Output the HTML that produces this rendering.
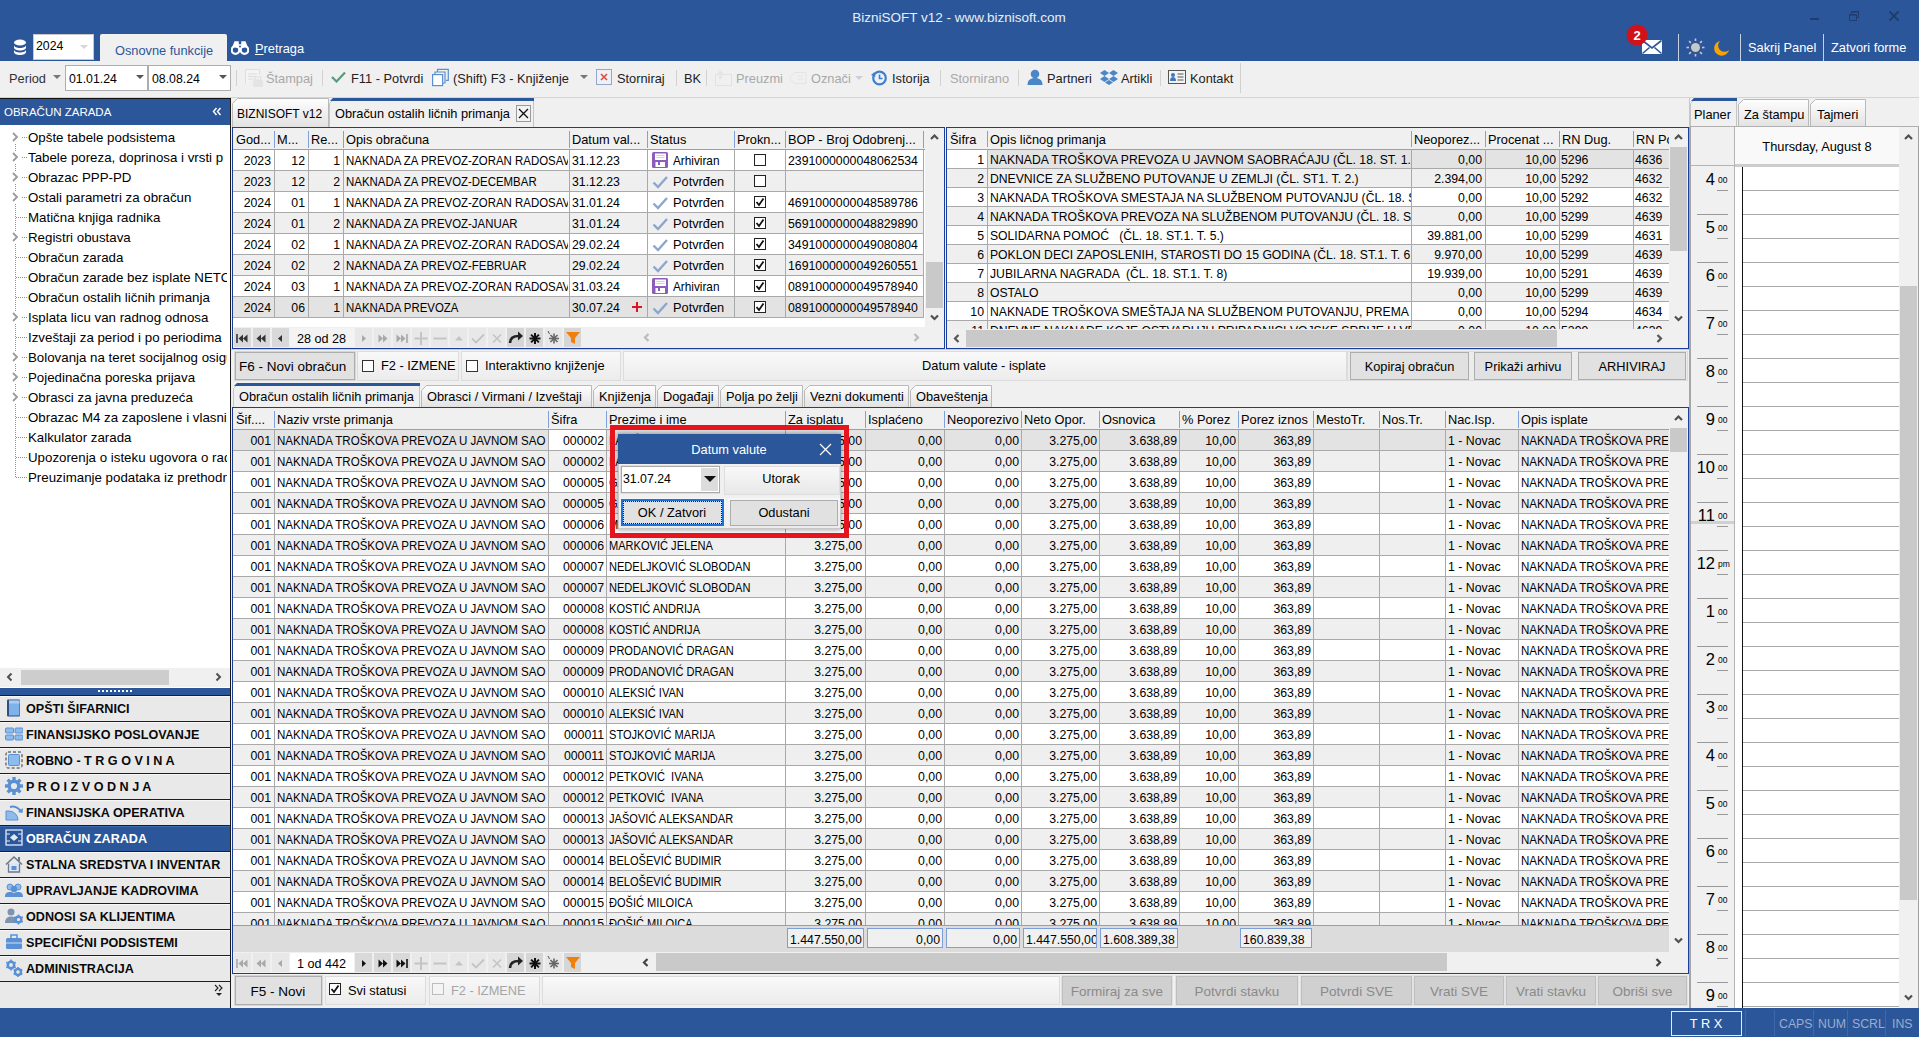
<!DOCTYPE html><html><head><meta charset="utf-8"><title>BizniSOFT</title><style>
*{box-sizing:border-box;margin:0;padding:0}
html,body{width:1919px;height:1037px;overflow:hidden;background:#f0f0f0;font-family:"Liberation Sans",sans-serif;color:#000;font-size:12.8px}
.a{position:absolute}
.t{position:absolute;white-space:nowrap;line-height:1}
.blue{background:#2b579a}
.sep{position:absolute;width:1px;background:#c8c8c8}
.dis{color:#9a9a9a}
.up{font-size:11.6px}
.num{font-size:12.3px}
.cell{position:absolute;white-space:nowrap;overflow:hidden;line-height:20px;height:20px}
.hd{position:absolute;white-space:nowrap;overflow:hidden;line-height:19px;height:19px;font-size:12.8px}
.btn{position:absolute;background:#e1e1e1;border:1px solid #adadad;text-align:center;white-space:nowrap}
.cb{position:absolute;width:13px;height:13px;border:1px solid #333;background:#fff}
.tab{position:absolute;background:linear-gradient(#fbfbfb,#e6e6e6);border:1px solid #b9b9b9;border-bottom:none;white-space:nowrap}
</style></head><body><div class="a" style="left:0px;top:0px;width:1919px;height:61px;background:#2b579a"></div>
<div class="t " style="left:759.0px;width:400px;text-align:center;top:11.00px;font-size:13.5px;color:#e8eef7;">BizniSOFT v12 - www.biznisoft.com</div>
<div class="a" style="left:1810px;top:18px;width:9px;height:2px;background:#1f3d6e"></div>
<svg class="a" style="left:1848px;top:10px;" width="12" height="12" viewBox="0 0 12 12"><rect x="1.5" y="4.5" width="7" height="6" fill="none" stroke="#1f3d6e"/><rect x="1" y="4" width="8" height="1.6" fill="#1f3d6e"/><path d="M3.5 4V1.5h7v6H9" fill="none" stroke="#1f3d6e"/><rect x="3" y="1" width="8" height="1.6" fill="#1f3d6e"/></svg>
<svg class="a" style="left:1888px;top:10px;" width="12" height="12" viewBox="0 0 12 12"><path d="M1.5 1.5l9 9M10.5 1.5l-9 9" stroke="#1f3d6e" stroke-width="2"/></svg>
<svg class="a" style="left:13px;top:39px;" width="14" height="16" viewBox="0 0 14 16"><ellipse cx="7" cy="3.5" rx="6" ry="3" fill="#fff"/><path d="M1 6c0 4 12 4 12 0v2.5c0 4-12 4-12 0z" fill="#fff"/><path d="M1 10.5c0 4 12 4 12 0V13c0 4-12 4-12 0z" fill="#fff"/></svg>
<div class="a" style="left:33px;top:34px;width:61px;height:26px;background:#fff;border:1px solid #c9c9c9"></div>
<div class="t " style="left:36px;top:40.00px;font-size:12.3px;">2024</div>
<svg class="a" style="left:80px;top:45px;" width="8" height="5" viewBox="0 0 8 5"><path d="M0 0h8L4 4z" fill="#d6d6d6"/></svg>
<div class="a" style="left:100px;top:34px;width:127px;height:27px;background:#f0f0f0;border-radius:2px 2px 0 0"></div>
<div class="t " style="left:115px;top:45.00px;font-size:12.8px;color:#2b579a;">Osnovne funkcije</div>
<svg class="a" style="left:231px;top:41px;" width="18" height="14" viewBox="0 0 18 14"><circle cx="4.5" cy="9" r="3.8" fill="none" stroke="#fff" stroke-width="2.2"/><circle cx="13.5" cy="9" r="3.8" fill="none" stroke="#fff" stroke-width="2.2"/><path d="M2 6L4 1h3v6M16 6l-2-5h-3v6M7 4h4" fill="#fff" stroke="#fff" stroke-width="1.5"/></svg>
<div class="t " style="left:255px;top:43.00px;font-size:12.8px;color:#fff;"><u>P</u>retraga</div>
<svg class="a" style="left:1641px;top:39px;" width="22" height="16" viewBox="0 0 22 16"><rect x="1" y="1" width="20" height="14" fill="#fff"/><path d="M1.5 1.5L11 9l9.5-7.5M1.5 14.5l7-6M20.5 14.5l-7-6" fill="none" stroke="#2b579a" stroke-width="1.6"/></svg>
<svg class="a" style="left:1626px;top:24px;" width="22" height="22" viewBox="0 0 22 22"><circle cx="11" cy="11" r="10.5" fill="#d0121b"/><text x="11" y="15.5" font-family="Liberation Sans" font-weight="bold" font-size="13" fill="#fff" text-anchor="middle">2</text></svg>
<div class="a" style="left:1678px;top:34px;width:1px;height:27px;background:#c5d0e3"></div>
<div class="a" style="left:1740px;top:34px;width:1px;height:27px;background:#c5d0e3"></div>
<div class="a" style="left:1823px;top:34px;width:1px;height:27px;background:#c5d0e3"></div>
<svg class="a" style="left:1686px;top:38px;" width="19" height="19" viewBox="0 0 19 19"><circle cx="9.5" cy="9.5" r="4.5" fill="#c8c8c8"/><line x1="16.00" y1="9.50" x2="18.50" y2="9.50" stroke="#c8c8c8" stroke-width="1.6"/><line x1="14.10" y1="14.10" x2="15.86" y2="15.86" stroke="#c8c8c8" stroke-width="1.6"/><line x1="9.50" y1="16.00" x2="9.50" y2="18.50" stroke="#c8c8c8" stroke-width="1.6"/><line x1="4.90" y1="14.10" x2="3.14" y2="15.86" stroke="#c8c8c8" stroke-width="1.6"/><line x1="3.00" y1="9.50" x2="0.50" y2="9.50" stroke="#c8c8c8" stroke-width="1.6"/><line x1="4.90" y1="4.90" x2="3.14" y2="3.14" stroke="#c8c8c8" stroke-width="1.6"/><line x1="9.50" y1="3.00" x2="9.50" y2="0.50" stroke="#c8c8c8" stroke-width="1.6"/><line x1="14.10" y1="4.90" x2="15.86" y2="3.14" stroke="#c8c8c8" stroke-width="1.6"/></svg>
<svg class="a" style="left:1714px;top:40px;" width="16" height="16" viewBox="0 0 16 16"><path d="M6 1A7.5 7.5 0 1 0 15 10 6 6 0 0 1 6 1z" fill="#f5a30b"/></svg>
<div class="t " style="left:1748px;top:42.00px;font-size:12.8px;color:#fff;">Sakrij Panel</div>
<div class="t " style="left:1831px;top:42.00px;font-size:12.8px;color:#fff;">Zatvori forme</div>
<div class="a" style="left:0px;top:61px;width:1919px;height:37px;background:#f0f0f0"></div>
<div class="a" style="left:0px;top:97px;width:1919px;height:1px;background:#d4d4d4"></div>
<div class="t " style="left:9px;top:73.00px;font-size:12.8px;color:#333;">Period</div>
<svg class="a" style="left:53px;top:75px;" width="8" height="5" viewBox="0 0 8 5"><path d="M0 0h8L4 4z" fill="#777"/></svg>
<div class="a" style="left:65px;top:65px;width:83px;height:26px;background:#fff;border:1px solid #adadad"></div>
<div class="t " style="left:69px;top:73.00px;font-size:12.3px;">01.01.24</div>
<svg class="a" style="left:136px;top:75px;" width="8" height="5" viewBox="0 0 8 5"><path d="M0 0h8L4 4z" fill="#555"/></svg>
<div class="a" style="left:148px;top:65px;width:83px;height:26px;background:#fff;border:1px solid #adadad"></div>
<div class="t " style="left:152px;top:73.00px;font-size:12.3px;">08.08.24</div>
<svg class="a" style="left:219px;top:75px;" width="8" height="5" viewBox="0 0 8 5"><path d="M0 0h8L4 4z" fill="#555"/></svg>
<div class="a" style="left:236px;top:70px;width:1px;height:16px;background:#d2d2d2"></div>
<div class="a" style="left:322px;top:70px;width:1px;height:16px;background:#d2d2d2"></div>
<div class="a" style="left:676px;top:70px;width:1px;height:16px;background:#d2d2d2"></div>
<div class="a" style="left:706px;top:70px;width:1px;height:16px;background:#d2d2d2"></div>
<div class="a" style="left:940px;top:70px;width:1px;height:16px;background:#d2d2d2"></div>
<div class="a" style="left:1018px;top:70px;width:1px;height:16px;background:#d2d2d2"></div>
<div class="a" style="left:1160px;top:70px;width:1px;height:16px;background:#d2d2d2"></div>
<div class="a" style="left:1240px;top:63px;width:1px;height:30px;background:#d0d0d0"></div>
<svg class="a" style="left:245px;top:69px;" width="19" height="19" viewBox="0 0 19 19"><path d="M0.5 14.5V0.5h14v5" fill="#f4f4f4" stroke="#dedede"/><path d="M3 5h9M3 7.5h8M3 10h5" stroke="#dcdcdc"/><rect x="8" y="11" width="10" height="7" rx="1.5" fill="#e4e4e4"/><rect x="10" y="8" width="6" height="3" fill="none" stroke="#e0e0e0"/></svg>
<div class="t " style="left:266px;top:73.00px;font-size:12.8px;color:#a8a8a8;">Štampaj</div>
<svg class="a" style="left:331px;top:71px;" width="15" height="12" viewBox="0 0 15 12"><path d="M1 6l4.5 4.5L14 1.5" fill="none" stroke="#5a9a7a" stroke-width="2.2"/></svg>
<div class="t " style="left:351px;top:73.00px;font-size:12.8px;color:#222;">F11 - Potvrdi</div>
<svg class="a" style="left:432px;top:68px;" width="18" height="19" viewBox="0 0 18 19"><rect x="0.6" y="6.6" width="10" height="11" fill="#fff" stroke="#5b8fd1" stroke-width="1.2"/><path d="M3 6.6V4h10v11h-2.4M5.5 4V1.3h10.8v11h-2.3" fill="none" stroke="#5b8fd1" stroke-width="1.2"/></svg>
<div class="t " style="left:453px;top:73.00px;font-size:12.8px;color:#222;">(Shift) F3 - Knjiženje</div>
<svg class="a" style="left:580px;top:75px;" width="8" height="5" viewBox="0 0 8 5"><path d="M0 0h8L4 4z" fill="#777"/></svg>
<svg class="a" style="left:596px;top:69px;" width="17" height="17" viewBox="0 0 17 17"><rect x="0.5" y="0.5" width="15" height="15" fill="#eef2f8" stroke="#8fa8cc"/><path d="M5 5l6 6M11 5l-6 6" stroke="#e04a3a" stroke-width="1.6"/></svg>
<div class="t " style="left:617px;top:73.00px;font-size:12.8px;color:#222;">Storniraj</div>
<div class="t " style="left:684px;top:73.00px;font-size:12.8px;color:#222;">BK</div>
<svg class="a" style="left:715px;top:69px;" width="18" height="17" viewBox="0 0 18 17"><rect x="0.5" y="5.5" width="16" height="11" fill="none" stroke="#e2e2e2"/><path d="M5 1l-3 4h2v5h3V5h2z" fill="#e6e6e6"/></svg>
<div class="t " style="left:736px;top:73.00px;font-size:12.8px;color:#a8a8a8;">Preuzmi</div>
<svg class="a" style="left:789px;top:72px;" width="18" height="12" viewBox="0 0 18 12"><path d="M5 0.5h12v11H5L0.5 6z" fill="none" stroke="#e4e4e4"/><path d="M8 4h6M8 7h6" stroke="#e4e4e4"/></svg>
<div class="t " style="left:811px;top:73.00px;font-size:12.8px;color:#a8a8a8;">Označi</div>
<svg class="a" style="left:855px;top:76px;" width="8" height="5" viewBox="0 0 8 5"><path d="M0 0h8L4 4z" fill="#cfcfcf"/></svg>
<svg class="a" style="left:871px;top:70px;" width="16" height="16" viewBox="0 0 16 16"><circle cx="8.5" cy="8" r="6.3" fill="none" stroke="#3b7fd0" stroke-width="2.2"/><path d="M8.5 4.5v4h3" fill="none" stroke="#3b7fd0" stroke-width="1.6"/><path d="M0 5l3.5-3 1 5z" fill="#3b7fd0"/></svg>
<div class="t " style="left:892px;top:73.00px;font-size:12.8px;color:#222;">Istorija</div>
<div class="t " style="left:950px;top:73.00px;font-size:12.8px;color:#a8a8a8;">Stornirano</div>
<svg class="a" style="left:1027px;top:69px;" width="16" height="16" viewBox="0 0 16 16"><circle cx="8" cy="5" r="4.3" fill="#4a86c8"/><path d="M0.5 16c0-5 3-7 7.5-7s7.5 2 7.5 7z" fill="#4a86c8"/></svg>
<div class="t " style="left:1047px;top:73.00px;font-size:12.8px;color:#222;">Partneri</div>
<svg class="a" style="left:1100px;top:70px;" width="18" height="15" viewBox="0 0 18 15"><path d="M4.5 0L0 3l4.5 3L9 3zM13.5 0L9 3l4.5 3L18 3zM4.5 6L0 9l4.5 3L9 9zM13.5 6L9 9l4.5 3L18 9zM9 10l-4 2.5L9 15l4-2.5z" fill="#4a86c8"/></svg>
<div class="t " style="left:1121px;top:73.00px;font-size:12.8px;color:#222;">Artikli</div>
<svg class="a" style="left:1168px;top:70px;" width="18" height="14" viewBox="0 0 18 14"><rect x="0.5" y="0.5" width="17" height="13" fill="#f3f3f3" stroke="#555"/><circle cx="5" cy="5" r="2" fill="#3a78c0"/><path d="M2 11c0-3 1.5-4 3-4s3 1 3 4z" fill="#3a78c0"/><path d="M9.5 4h6M9.5 7h6M9.5 10h6" stroke="#555"/></svg>
<div class="t " style="left:1190px;top:73.00px;font-size:12.8px;color:#222;">Kontakt</div>
<div class="a" style="left:0px;top:98px;width:231px;height:910px;background:#fff"></div>
<div class="a" style="left:230px;top:98px;width:1px;height:910px;background:#1a1a1a"></div>
<div class="a" style="left:0px;top:98px;width:231px;height:1px;background:#111"></div>
<div class="a" style="left:0px;top:99px;width:230px;height:26px;background:#2b579a"></div>
<div class="t " style="left:4px;top:107.00px;font-size:11.5px;color:#fff;">OBRAČUN ZARADA</div>
<svg class="a" style="left:212px;top:107px;" width="10" height="9" viewBox="0 0 10 9"><path d="M4.5 1L1.5 4.5l3 3.5M8.5 1L5.5 4.5l3 3.5" fill="none" stroke="#fff" stroke-width="1.5"/></svg>
<div class="a" style="left:15px;top:142px;width:1px;height:335px;border-left:1px dotted #909090"></div>
<div class="a" style="left:10px;top:131px;width:10px;height:12px;background:#fff"></div>
<svg class="a" style="left:11px;top:132px;" width="8" height="10" viewBox="0 0 8 10"><path d="M2 1l4 4-4 4" fill="none" stroke="#9a9a9a" stroke-width="1.8"/></svg>
<div class="a" style="left:22px;top:137px;width:5px;height:1px;border-top:1px dotted #909090"></div>
<div class="a" style="left:28px;top:127px;width:199px;height:20px;overflow:hidden"><div class="t " style="left:0px;top:4.00px;font-size:13.3px;">Opšte tabele podsistema</div></div>
<div class="a" style="left:10px;top:151px;width:10px;height:12px;background:#fff"></div>
<svg class="a" style="left:11px;top:152px;" width="8" height="10" viewBox="0 0 8 10"><path d="M2 1l4 4-4 4" fill="none" stroke="#9a9a9a" stroke-width="1.8"/></svg>
<div class="a" style="left:22px;top:157px;width:5px;height:1px;border-top:1px dotted #909090"></div>
<div class="a" style="left:28px;top:147px;width:199px;height:20px;overflow:hidden"><div class="t " style="left:0px;top:4.00px;font-size:13.3px;">Tabele poreza, doprinosa i vrsti p</div></div>
<div class="a" style="left:10px;top:171px;width:10px;height:12px;background:#fff"></div>
<svg class="a" style="left:11px;top:172px;" width="8" height="10" viewBox="0 0 8 10"><path d="M2 1l4 4-4 4" fill="none" stroke="#9a9a9a" stroke-width="1.8"/></svg>
<div class="a" style="left:22px;top:177px;width:5px;height:1px;border-top:1px dotted #909090"></div>
<div class="a" style="left:28px;top:167px;width:199px;height:20px;overflow:hidden"><div class="t " style="left:0px;top:4.00px;font-size:13.3px;">Obrazac PPP-PD</div></div>
<div class="a" style="left:10px;top:191px;width:10px;height:12px;background:#fff"></div>
<svg class="a" style="left:11px;top:192px;" width="8" height="10" viewBox="0 0 8 10"><path d="M2 1l4 4-4 4" fill="none" stroke="#9a9a9a" stroke-width="1.8"/></svg>
<div class="a" style="left:22px;top:197px;width:5px;height:1px;border-top:1px dotted #909090"></div>
<div class="a" style="left:28px;top:187px;width:199px;height:20px;overflow:hidden"><div class="t " style="left:0px;top:4.00px;font-size:13.3px;">Ostali parametri za obračun</div></div>
<div class="a" style="left:16px;top:217px;width:11px;height:1px;border-top:1px dotted #909090"></div>
<div class="a" style="left:28px;top:207px;width:199px;height:20px;overflow:hidden"><div class="t " style="left:0px;top:4.00px;font-size:13.3px;">Matična knjiga radnika</div></div>
<div class="a" style="left:10px;top:231px;width:10px;height:12px;background:#fff"></div>
<svg class="a" style="left:11px;top:232px;" width="8" height="10" viewBox="0 0 8 10"><path d="M2 1l4 4-4 4" fill="none" stroke="#9a9a9a" stroke-width="1.8"/></svg>
<div class="a" style="left:22px;top:237px;width:5px;height:1px;border-top:1px dotted #909090"></div>
<div class="a" style="left:28px;top:227px;width:199px;height:20px;overflow:hidden"><div class="t " style="left:0px;top:4.00px;font-size:13.3px;">Registri obustava</div></div>
<div class="a" style="left:16px;top:257px;width:11px;height:1px;border-top:1px dotted #909090"></div>
<div class="a" style="left:28px;top:247px;width:199px;height:20px;overflow:hidden"><div class="t " style="left:0px;top:4.00px;font-size:13.3px;">Obračun zarada</div></div>
<div class="a" style="left:16px;top:277px;width:11px;height:1px;border-top:1px dotted #909090"></div>
<div class="a" style="left:28px;top:267px;width:199px;height:20px;overflow:hidden"><div class="t " style="left:0px;top:4.00px;font-size:13.3px;">Obračun zarade bez isplate NETO</div></div>
<div class="a" style="left:16px;top:297px;width:11px;height:1px;border-top:1px dotted #909090"></div>
<div class="a" style="left:28px;top:287px;width:199px;height:20px;overflow:hidden"><div class="t " style="left:0px;top:4.00px;font-size:13.3px;">Obračun ostalih ličnih primanja</div></div>
<div class="a" style="left:10px;top:311px;width:10px;height:12px;background:#fff"></div>
<svg class="a" style="left:11px;top:312px;" width="8" height="10" viewBox="0 0 8 10"><path d="M2 1l4 4-4 4" fill="none" stroke="#9a9a9a" stroke-width="1.8"/></svg>
<div class="a" style="left:22px;top:317px;width:5px;height:1px;border-top:1px dotted #909090"></div>
<div class="a" style="left:28px;top:307px;width:199px;height:20px;overflow:hidden"><div class="t " style="left:0px;top:4.00px;font-size:13.3px;">Isplata licu van radnog odnosa</div></div>
<div class="a" style="left:16px;top:337px;width:11px;height:1px;border-top:1px dotted #909090"></div>
<div class="a" style="left:28px;top:327px;width:199px;height:20px;overflow:hidden"><div class="t " style="left:0px;top:4.00px;font-size:13.3px;">Izveštaji za period i po periodima</div></div>
<div class="a" style="left:10px;top:351px;width:10px;height:12px;background:#fff"></div>
<svg class="a" style="left:11px;top:352px;" width="8" height="10" viewBox="0 0 8 10"><path d="M2 1l4 4-4 4" fill="none" stroke="#9a9a9a" stroke-width="1.8"/></svg>
<div class="a" style="left:22px;top:357px;width:5px;height:1px;border-top:1px dotted #909090"></div>
<div class="a" style="left:28px;top:347px;width:199px;height:20px;overflow:hidden"><div class="t " style="left:0px;top:4.00px;font-size:13.3px;">Bolovanja na teret socijalnog osiguranja</div></div>
<div class="a" style="left:10px;top:371px;width:10px;height:12px;background:#fff"></div>
<svg class="a" style="left:11px;top:372px;" width="8" height="10" viewBox="0 0 8 10"><path d="M2 1l4 4-4 4" fill="none" stroke="#9a9a9a" stroke-width="1.8"/></svg>
<div class="a" style="left:22px;top:377px;width:5px;height:1px;border-top:1px dotted #909090"></div>
<div class="a" style="left:28px;top:367px;width:199px;height:20px;overflow:hidden"><div class="t " style="left:0px;top:4.00px;font-size:13.3px;">Pojedinačna poreska prijava</div></div>
<div class="a" style="left:10px;top:391px;width:10px;height:12px;background:#fff"></div>
<svg class="a" style="left:11px;top:392px;" width="8" height="10" viewBox="0 0 8 10"><path d="M2 1l4 4-4 4" fill="none" stroke="#9a9a9a" stroke-width="1.8"/></svg>
<div class="a" style="left:22px;top:397px;width:5px;height:1px;border-top:1px dotted #909090"></div>
<div class="a" style="left:28px;top:387px;width:199px;height:20px;overflow:hidden"><div class="t " style="left:0px;top:4.00px;font-size:13.3px;">Obrasci za javna preduzeća</div></div>
<div class="a" style="left:16px;top:417px;width:11px;height:1px;border-top:1px dotted #909090"></div>
<div class="a" style="left:28px;top:407px;width:199px;height:20px;overflow:hidden"><div class="t " style="left:0px;top:4.00px;font-size:13.3px;">Obrazac M4 za zaposlene i vlasnike</div></div>
<div class="a" style="left:16px;top:437px;width:11px;height:1px;border-top:1px dotted #909090"></div>
<div class="a" style="left:28px;top:427px;width:199px;height:20px;overflow:hidden"><div class="t " style="left:0px;top:4.00px;font-size:13.3px;">Kalkulator zarada</div></div>
<div class="a" style="left:16px;top:457px;width:11px;height:1px;border-top:1px dotted #909090"></div>
<div class="a" style="left:28px;top:447px;width:199px;height:20px;overflow:hidden"><div class="t " style="left:0px;top:4.00px;font-size:13.3px;">Upozorenja o isteku ugovora o radu</div></div>
<div class="a" style="left:16px;top:477px;width:11px;height:1px;border-top:1px dotted #909090"></div>
<div class="a" style="left:28px;top:467px;width:199px;height:20px;overflow:hidden"><div class="t " style="left:0px;top:4.00px;font-size:13.3px;">Preuzimanje podataka iz prethodne</div></div>
<div class="a" style="left:0px;top:668px;width:230px;height:19px;background:#f0f0f0"></div>
<div class="a" style="left:21px;top:670px;width:148px;height:15px;background:#cdcdcd"></div>
<svg class="a" style="left:6px;top:672px;" width="8" height="10" viewBox="0 0 8 10"><path d="M5.5 1.5L2 5l3.5 3.5" fill="none" stroke="#505050" stroke-width="2"/></svg>
<svg class="a" style="left:214px;top:672px;" width="8" height="10" viewBox="0 0 8 10"><path d="M2.5 1.5L6 5 2.5 8.5" fill="none" stroke="#505050" stroke-width="2"/></svg>
<div class="a" style="left:0px;top:688px;width:230px;height:7px;background:#2b579a"></div>
<div class="a" style="left:98px;top:690px;width:34px;height:2px;background:repeating-linear-gradient(90deg,#fff 0 2px,transparent 2px 4px)"></div>
<div class="a" style="left:0px;top:695px;width:230px;height:26px;background:#e9e9e9;border-top:1px solid #1e1e1e;box-shadow:inset 0 1px 0 #f7f7f7"></div>
<div class="t " style="left:26px;top:703.00px;font-size:12.6px;color:#0a0a0a;font-weight:bold">OPŠTI ŠIFARNICI</div>
<svg class="a" style="left:5px;top:699px;" width="18" height="18" viewBox="0 0 18 18"><rect x="2" y="0.5" width="13" height="17" rx="1" fill="#2f4f80"/><rect x="4" y="1.5" width="10.5" height="15" fill="#7fb2ea"/><rect x="4" y="1.5" width="10.5" height="3" fill="#a9cdf3"/></svg>
<div class="a" style="left:0px;top:721px;width:230px;height:26px;background:#e9e9e9;border-top:1px solid #1e1e1e;box-shadow:inset 0 1px 0 #f7f7f7"></div>
<div class="t " style="left:26px;top:729.00px;font-size:12.6px;color:#0a0a0a;font-weight:bold">FINANSIJSKO POSLOVANJE</div>
<svg class="a" style="left:5px;top:725px;" width="18" height="18" viewBox="0 0 18 18"><rect x="0.5" y="3" width="8" height="5" rx="1" fill="#8dbbec" stroke="#5a90d4"/><rect x="10" y="3" width="8" height="5" rx="1" fill="#8dbbec" stroke="#5a90d4"/><rect x="0.5" y="10" width="8" height="5" rx="1" fill="#8dbbec" stroke="#5a90d4"/><rect x="10" y="10" width="8" height="5" rx="1" fill="#8dbbec" stroke="#5a90d4"/></svg>
<div class="a" style="left:0px;top:747px;width:230px;height:26px;background:#e9e9e9;border-top:1px solid #1e1e1e;box-shadow:inset 0 1px 0 #f7f7f7"></div>
<div class="t " style="left:26px;top:755.00px;font-size:12.6px;color:#0a0a0a;font-weight:bold">ROBNO - T R G O V I N A</div>
<svg class="a" style="left:5px;top:751px;" width="18" height="18" viewBox="0 0 18 18"><rect x="1" y="1" width="16" height="16" rx="2" fill="none" stroke="#333" stroke-dasharray="3 2"/><rect x="3.5" y="3.5" width="11" height="11" rx="1" fill="#8dbbec" stroke="#5a90d4"/></svg>
<div class="a" style="left:0px;top:773px;width:230px;height:26px;background:#e9e9e9;border-top:1px solid #1e1e1e;box-shadow:inset 0 1px 0 #f7f7f7"></div>
<div class="t " style="left:26px;top:781.00px;font-size:12.6px;color:#0a0a0a;font-weight:bold">P R O I Z V O D N J A</div>
<svg class="a" style="left:5px;top:777px;" width="18" height="18" viewBox="0 0 18 18"><circle cx="9" cy="9" r="4.8" fill="none" stroke="#5a90d4" stroke-width="3.4"/><rect x="7.3" y="0" width="3.4" height="4" fill="#5a90d4" transform="rotate(0 9 9)"/><rect x="7.3" y="0" width="3.4" height="4" fill="#5a90d4" transform="rotate(45 9 9)"/><rect x="7.3" y="0" width="3.4" height="4" fill="#5a90d4" transform="rotate(90 9 9)"/><rect x="7.3" y="0" width="3.4" height="4" fill="#5a90d4" transform="rotate(135 9 9)"/><rect x="7.3" y="0" width="3.4" height="4" fill="#5a90d4" transform="rotate(180 9 9)"/><rect x="7.3" y="0" width="3.4" height="4" fill="#5a90d4" transform="rotate(225 9 9)"/><rect x="7.3" y="0" width="3.4" height="4" fill="#5a90d4" transform="rotate(270 9 9)"/><rect x="7.3" y="0" width="3.4" height="4" fill="#5a90d4" transform="rotate(315 9 9)"/></svg>
<div class="a" style="left:0px;top:799px;width:230px;height:26px;background:#e9e9e9;border-top:1px solid #1e1e1e;box-shadow:inset 0 1px 0 #f7f7f7"></div>
<div class="t " style="left:26px;top:807.00px;font-size:12.6px;color:#0a0a0a;font-weight:bold">FINANSIJSKA OPERATIVA</div>
<svg class="a" style="left:5px;top:803px;" width="18" height="18" viewBox="0 0 18 18"><path d="M1 17V8h3a9 9 0 0 1 9 9z" fill="#8dbbec" stroke="#5a90d4"/><path d="M5 4a9 9 0 0 1 11 5" fill="none" stroke="#5a90d4" stroke-width="2"/><path d="M13 9l4.5 1L18 5z" fill="#5a90d4"/></svg>
<div class="a" style="left:0px;top:825px;width:230px;height:26px;background:#2b579a;border-top:1px solid #1e1e1e;box-shadow:inset 0 1px 0 #3d69ad"></div>
<div class="t " style="left:26px;top:833.00px;font-size:12.6px;color:#fff;font-weight:bold">OBRAČUN ZARADA</div>
<svg class="a" style="left:5px;top:829px;" width="18" height="18" viewBox="0 0 18 18"><rect x="1" y="1" width="16" height="15" fill="none" stroke="#dfe9f7" stroke-width="1.3"/><path d="M5 8.5l4-3.5 4 3.5-4 3.5z" fill="#dfe9f7"/><path d="M1 5h4M13 5h4M1 12h4M13 12h4" stroke="#dfe9f7"/></svg>
<div class="a" style="left:0px;top:851px;width:230px;height:26px;background:#e9e9e9;border-top:1px solid #1e1e1e;box-shadow:inset 0 1px 0 #f7f7f7"></div>
<div class="t " style="left:26px;top:859.00px;font-size:12.6px;color:#0a0a0a;font-weight:bold">STALNA SREDSTVA I INVENTAR</div>
<svg class="a" style="left:5px;top:855px;" width="18" height="18" viewBox="0 0 18 18"><path d="M1 9.5L9 2l8 7.5" fill="none" stroke="#6c7a8c" stroke-width="1.6"/><path d="M3.5 8.5v8.5h11V8.5" fill="#dde6f0" stroke="#6c7a8c" stroke-width="1.3"/><rect x="6.5" y="11" width="5" height="4" fill="#5a90d4"/><rect x="13" y="2" width="2" height="4" fill="#6c7a8c"/></svg>
<div class="a" style="left:0px;top:877px;width:230px;height:26px;background:#e9e9e9;border-top:1px solid #1e1e1e;box-shadow:inset 0 1px 0 #f7f7f7"></div>
<div class="t " style="left:26px;top:885.00px;font-size:12.6px;color:#0a0a0a;font-weight:bold">UPRAVLJANJE KADROVIMA</div>
<svg class="a" style="left:5px;top:881px;" width="18" height="18" viewBox="0 0 18 18"><circle cx="5" cy="6" r="3" fill="#8dbbec" stroke="#5a90d4"/><circle cx="13" cy="6" r="3" fill="#8dbbec" stroke="#5a90d4"/><circle cx="9" cy="8" r="3.2" fill="#5a90d4"/><path d="M0 16c0-4 2-5 5-5s5 1 5 5zM8 16c0-4 2-5 5-5s5 1 5 5z" fill="#5a90d4"/></svg>
<div class="a" style="left:0px;top:903px;width:230px;height:26px;background:#e9e9e9;border-top:1px solid #1e1e1e;box-shadow:inset 0 1px 0 #f7f7f7"></div>
<div class="t " style="left:26px;top:911.00px;font-size:12.6px;color:#0a0a0a;font-weight:bold">ODNOSI SA KLIJENTIMA</div>
<svg class="a" style="left:5px;top:907px;" width="18" height="18" viewBox="0 0 18 18"><circle cx="6" cy="5" r="3.5" fill="#7d93b0"/><path d="M0 16c0-5 3-6.5 6-6.5s6 1.5 6 6.5z" fill="#7d93b0"/><circle cx="13.5" cy="12.5" r="2.8" fill="none" stroke="#5a90d4" stroke-width="2.4"/><rect x="12.7" y="7.5" width="1.6" height="2" fill="#5a90d4" transform="rotate(0 13.5 12.5)"/><rect x="12.7" y="7.5" width="1.6" height="2" fill="#5a90d4" transform="rotate(60 13.5 12.5)"/><rect x="12.7" y="7.5" width="1.6" height="2" fill="#5a90d4" transform="rotate(120 13.5 12.5)"/><rect x="12.7" y="7.5" width="1.6" height="2" fill="#5a90d4" transform="rotate(180 13.5 12.5)"/><rect x="12.7" y="7.5" width="1.6" height="2" fill="#5a90d4" transform="rotate(240 13.5 12.5)"/><rect x="12.7" y="7.5" width="1.6" height="2" fill="#5a90d4" transform="rotate(300 13.5 12.5)"/></svg>
<div class="a" style="left:0px;top:929px;width:230px;height:26px;background:#e9e9e9;border-top:1px solid #1e1e1e;box-shadow:inset 0 1px 0 #f7f7f7"></div>
<div class="t " style="left:26px;top:937.00px;font-size:12.6px;color:#0a0a0a;font-weight:bold">SPECIFIČNI PODSISTEMI</div>
<svg class="a" style="left:5px;top:933px;" width="18" height="18" viewBox="0 0 18 18"><rect x="1" y="5" width="16" height="11" rx="1.5" fill="#5a90d4"/><rect x="6" y="2" width="6" height="4" fill="none" stroke="#5a90d4" stroke-width="1.5"/><path d="M1 10h16" stroke="#cfe0f5" stroke-width="1"/></svg>
<div class="a" style="left:0px;top:955px;width:230px;height:26px;background:#e9e9e9;border-top:1px solid #1e1e1e;box-shadow:inset 0 1px 0 #f7f7f7"></div>
<div class="t " style="left:26px;top:963.00px;font-size:12.6px;color:#0a0a0a;font-weight:bold">ADMINISTRACIJA</div>
<svg class="a" style="left:5px;top:959px;" width="18" height="18" viewBox="0 0 18 18"><circle cx="6" cy="6" r="3.2" fill="none" stroke="#5a90d4" stroke-width="2.6"/><circle cx="13" cy="13" r="3" fill="none" stroke="#5a90d4" stroke-width="2.4"/><rect x="5.2" y="0.5" width="1.6" height="2.2" fill="#5a90d4" transform="rotate(0 6 6)"/><rect x="5.2" y="0.5" width="1.6" height="2.2" fill="#5a90d4" transform="rotate(60 6 6)"/><rect x="5.2" y="0.5" width="1.6" height="2.2" fill="#5a90d4" transform="rotate(120 6 6)"/><rect x="5.2" y="0.5" width="1.6" height="2.2" fill="#5a90d4" transform="rotate(180 6 6)"/><rect x="5.2" y="0.5" width="1.6" height="2.2" fill="#5a90d4" transform="rotate(240 6 6)"/><rect x="5.2" y="0.5" width="1.6" height="2.2" fill="#5a90d4" transform="rotate(300 6 6)"/><rect x="12.2" y="8" width="1.6" height="2" fill="#5a90d4" transform="rotate(0 13 13)"/><rect x="12.2" y="8" width="1.6" height="2" fill="#5a90d4" transform="rotate(60 13 13)"/><rect x="12.2" y="8" width="1.6" height="2" fill="#5a90d4" transform="rotate(120 13 13)"/><rect x="12.2" y="8" width="1.6" height="2" fill="#5a90d4" transform="rotate(180 13 13)"/><rect x="12.2" y="8" width="1.6" height="2" fill="#5a90d4" transform="rotate(240 13 13)"/><rect x="12.2" y="8" width="1.6" height="2" fill="#5a90d4" transform="rotate(300 13 13)"/></svg>
<div class="a" style="left:0px;top:981px;width:230px;height:27px;background:#e9e9e9;border-top:1px solid #1e1e1e"></div>
<svg class="a" style="left:214px;top:984px;" width="9" height="14" viewBox="0 0 9 14"><path d="M1 1l3 3-3 3M5 1l3 3-3 3" fill="none" stroke="#222" stroke-width="1.1"/><path d="M2 9h6l-3 3z" fill="#222"/></svg>
<div class="a" style="left:231px;top:98px;width:1459px;height:29px;background:#f0f0f0"></div>
<svg class="a" style="left:232px;top:98px;" width="97" height="29" viewBox="0 0 97 29"><defs><linearGradient id="tg1" x1="0" y1="0" x2="0" y2="1"><stop offset="0" stop-color="#fefefe"/><stop offset="1" stop-color="#e2e2e2"/></linearGradient></defs><path d="M0.5 29 V5.5 L5.5 0.5 H96.5 V29" fill="url(#tg1)" stroke="#b9b9b9"/></svg><div class="t " style="left:237px;top:108.00px;font-size:12px;color:#000;">BIZNISOFT v12</div>
<svg class="a" style="left:329px;top:98px;" width="205" height="29" viewBox="0 0 205 29"><path d="M0.5 29 V5.5 L5.5 0.5 H204.5 V29" fill="#f0f0f0" stroke="#c4c4c4"/><path d="M4 0 H205 V3 H1z" fill="#2b579a"/></svg><div class="t " style="left:335px;top:108.00px;font-size:12.8px;color:#000;">Obračun ostalih ličnih primanja</div>
<div class="a" style="left:516px;top:105px;width:15px;height:17px;border:1px solid #9a9a9a;background:#f3f3f3"></div>
<svg class="a" style="left:518px;top:107px;" width="11" height="13" viewBox="0 0 11 13"><path d="M1 2l9 9M10 2l-9 9" stroke="#111" stroke-width="1.3"/></svg>
<div class="a" style="left:232px;top:127px;width:713px;height:222px;background:#fff;border:1px solid #1b3d9c"></div>
<div class="a" style="left:233px;top:128px;width:692px;height:21px;background:#f0f0f0"></div>
<div class="a" style="left:233px;top:149px;width:692px;height:1px;background:#7ea2dc"></div>
<div class="t " style="left:236px;top:134.00px;font-size:12.8px;color:#000;">God...</div>
<div class="t " style="left:277px;top:134.00px;font-size:12.8px;color:#000;">M...</div>
<div class="t " style="left:311px;top:134.00px;font-size:12.8px;color:#000;">Re...</div>
<div class="t " style="left:346px;top:134.00px;font-size:12.8px;color:#000;">Opis obračuna</div>
<div class="t " style="left:572px;top:134.00px;font-size:12.8px;color:#000;">Datum val...</div>
<div class="t " style="left:650px;top:134.00px;font-size:12.8px;color:#000;">Status</div>
<div class="t " style="left:737px;top:134.00px;font-size:12.8px;color:#000;">Prokn...</div>
<div class="t " style="left:788px;top:134.00px;font-size:12.8px;color:#000;">BOP - Broj Odobrenj...</div>
<div class="a" style="left:274px;top:131px;width:1px;height:17px;background:#7ea2dc"></div>
<div class="a" style="left:308px;top:131px;width:1px;height:17px;background:#7ea2dc"></div>
<div class="a" style="left:343px;top:131px;width:1px;height:17px;background:#7ea2dc"></div>
<div class="a" style="left:569px;top:131px;width:1px;height:17px;background:#7ea2dc"></div>
<div class="a" style="left:647px;top:131px;width:1px;height:17px;background:#7ea2dc"></div>
<div class="a" style="left:734px;top:131px;width:1px;height:17px;background:#7ea2dc"></div>
<div class="a" style="left:785px;top:131px;width:1px;height:17px;background:#7ea2dc"></div>
<div class="a" style="left:923px;top:131px;width:1px;height:17px;background:#7ea2dc"></div>
<div class="a" style="left:233px;top:150px;width:690px;height:21px;background:#fff"></div>
<div class="a" style="left:233px;top:170px;width:690px;height:1px;background:#a9a9a9"></div>
<div class="t " style="left:-29px;width:300px;text-align:right;top:155.00px;font-size:12.3px;color:#000;">2023</div>
<div class="t " style="left:5px;width:300px;text-align:right;top:155.00px;font-size:12.3px;color:#000;">12</div>
<div class="t " style="left:40px;width:300px;text-align:right;top:155.00px;font-size:12.3px;color:#000;">1</div>
<div class="a" style="left:344px;top:150px;width:224px;height:20px;overflow:hidden"><div class="t" style="left:2px;top:5px;font-size:12.3px;color:#000;transform:scaleX(0.93);transform-origin:0 0">NAKNADA ZA PREVOZ-ZORAN RADOSAVLJEVIĆ</div></div>
<div class="t " style="left:572px;top:155.00px;font-size:12.3px;color:#000;">31.12.23</div>
<svg class="a" style="left:652px;top:152px;" width="16" height="16" viewBox="0 0 16 16"><rect x="0" y="0" width="16" height="16" rx="1.5" fill="#8e5cba"/><rect x="3" y="1.5" width="11" height="6.5" fill="#fff"/><path d="M4.5 3.5h8M4.5 5.5h8" stroke="#cfcfcf"/><rect x="3.5" y="10" width="9.5" height="5" fill="#fff"/><rect x="6" y="10" width="2" height="3" fill="#8e5cba"/></svg>
<div class="t" style="left:673px;top:155px;font-size:12.8px;color:#000;transform:scaleX(0.92);transform-origin:0 0">Arhiviran</div>
<div class="a" style="left:754px;top:154px;width:12px;height:12px;border:1px solid #222;background:#fff"></div>
<div class="t " style="left:788px;top:155.00px;font-size:12.3px;color:#000;">2391000000048062534</div>
<div class="a" style="left:233px;top:171px;width:690px;height:21px;background:#efefef"></div>
<div class="a" style="left:233px;top:191px;width:690px;height:1px;background:#a9a9a9"></div>
<div class="t " style="left:-29px;width:300px;text-align:right;top:176.00px;font-size:12.3px;color:#000;">2023</div>
<div class="t " style="left:5px;width:300px;text-align:right;top:176.00px;font-size:12.3px;color:#000;">12</div>
<div class="t " style="left:40px;width:300px;text-align:right;top:176.00px;font-size:12.3px;color:#000;">2</div>
<div class="a" style="left:344px;top:171px;width:224px;height:20px;overflow:hidden"><div class="t" style="left:2px;top:5px;font-size:12.3px;color:#000;transform:scaleX(0.93);transform-origin:0 0">NAKNADA ZA PREVOZ-DECEMBAR</div></div>
<div class="t " style="left:572px;top:176.00px;font-size:12.3px;color:#000;">31.12.23</div>
<svg class="a" style="left:652px;top:175px;" width="16" height="14" viewBox="0 0 16 14"><path d="M1.5 7.5l4.5 4.5L15 2" fill="none" stroke="#8ca6d0" stroke-width="2.4"/></svg>
<div class="t " style="left:673px;top:176.00px;font-size:12.8px;color:#000;">Potvrđen</div>
<div class="a" style="left:754px;top:175px;width:12px;height:12px;border:1px solid #222;background:#fff"></div>
<div class="t " style="left:788px;top:176.00px;font-size:12.3px;color:#000;"></div>
<div class="a" style="left:233px;top:192px;width:690px;height:21px;background:#fff"></div>
<div class="a" style="left:233px;top:212px;width:690px;height:1px;background:#a9a9a9"></div>
<div class="t " style="left:-29px;width:300px;text-align:right;top:197.00px;font-size:12.3px;color:#000;">2024</div>
<div class="t " style="left:5px;width:300px;text-align:right;top:197.00px;font-size:12.3px;color:#000;">01</div>
<div class="t " style="left:40px;width:300px;text-align:right;top:197.00px;font-size:12.3px;color:#000;">1</div>
<div class="a" style="left:344px;top:192px;width:224px;height:20px;overflow:hidden"><div class="t" style="left:2px;top:5px;font-size:12.3px;color:#000;transform:scaleX(0.93);transform-origin:0 0">NAKNADA ZA PREVOZ-ZORAN RADOSAVLJEVIĆ</div></div>
<div class="t " style="left:572px;top:197.00px;font-size:12.3px;color:#000;">31.01.24</div>
<svg class="a" style="left:652px;top:196px;" width="16" height="14" viewBox="0 0 16 14"><path d="M1.5 7.5l4.5 4.5L15 2" fill="none" stroke="#8ca6d0" stroke-width="2.4"/></svg>
<div class="t " style="left:673px;top:197.00px;font-size:12.8px;color:#000;">Potvrđen</div>
<div class="a" style="left:754px;top:196px;width:12px;height:12px;border:1px solid #222;background:#fff"></div>
<svg class="a" style="left:755px;top:197px;" width="10" height="10" viewBox="0 0 10 10"><path d="M1.5 5l2.5 3L8.5 1.5" fill="none" stroke="#111" stroke-width="1.8"/></svg>
<div class="t " style="left:788px;top:197.00px;font-size:12.3px;color:#000;">4691000000048589786</div>
<div class="a" style="left:233px;top:213px;width:690px;height:21px;background:#efefef"></div>
<div class="a" style="left:233px;top:233px;width:690px;height:1px;background:#a9a9a9"></div>
<div class="t " style="left:-29px;width:300px;text-align:right;top:218.00px;font-size:12.3px;color:#000;">2024</div>
<div class="t " style="left:5px;width:300px;text-align:right;top:218.00px;font-size:12.3px;color:#000;">01</div>
<div class="t " style="left:40px;width:300px;text-align:right;top:218.00px;font-size:12.3px;color:#000;">2</div>
<div class="a" style="left:344px;top:213px;width:224px;height:20px;overflow:hidden"><div class="t" style="left:2px;top:5px;font-size:12.3px;color:#000;transform:scaleX(0.93);transform-origin:0 0">NAKNADA ZA PREVOZ-JANUAR</div></div>
<div class="t " style="left:572px;top:218.00px;font-size:12.3px;color:#000;">31.01.24</div>
<svg class="a" style="left:652px;top:217px;" width="16" height="14" viewBox="0 0 16 14"><path d="M1.5 7.5l4.5 4.5L15 2" fill="none" stroke="#8ca6d0" stroke-width="2.4"/></svg>
<div class="t " style="left:673px;top:218.00px;font-size:12.8px;color:#000;">Potvrđen</div>
<div class="a" style="left:754px;top:217px;width:12px;height:12px;border:1px solid #222;background:#fff"></div>
<svg class="a" style="left:755px;top:218px;" width="10" height="10" viewBox="0 0 10 10"><path d="M1.5 5l2.5 3L8.5 1.5" fill="none" stroke="#111" stroke-width="1.8"/></svg>
<div class="t " style="left:788px;top:218.00px;font-size:12.3px;color:#000;">5691000000048829890</div>
<div class="a" style="left:233px;top:234px;width:690px;height:21px;background:#fff"></div>
<div class="a" style="left:233px;top:254px;width:690px;height:1px;background:#a9a9a9"></div>
<div class="t " style="left:-29px;width:300px;text-align:right;top:239.00px;font-size:12.3px;color:#000;">2024</div>
<div class="t " style="left:5px;width:300px;text-align:right;top:239.00px;font-size:12.3px;color:#000;">02</div>
<div class="t " style="left:40px;width:300px;text-align:right;top:239.00px;font-size:12.3px;color:#000;">1</div>
<div class="a" style="left:344px;top:234px;width:224px;height:20px;overflow:hidden"><div class="t" style="left:2px;top:5px;font-size:12.3px;color:#000;transform:scaleX(0.93);transform-origin:0 0">NAKNADA ZA PREVOZ-ZORAN RADOSAVLJEVIĆ</div></div>
<div class="t " style="left:572px;top:239.00px;font-size:12.3px;color:#000;">29.02.24</div>
<svg class="a" style="left:652px;top:238px;" width="16" height="14" viewBox="0 0 16 14"><path d="M1.5 7.5l4.5 4.5L15 2" fill="none" stroke="#8ca6d0" stroke-width="2.4"/></svg>
<div class="t " style="left:673px;top:239.00px;font-size:12.8px;color:#000;">Potvrđen</div>
<div class="a" style="left:754px;top:238px;width:12px;height:12px;border:1px solid #222;background:#fff"></div>
<svg class="a" style="left:755px;top:239px;" width="10" height="10" viewBox="0 0 10 10"><path d="M1.5 5l2.5 3L8.5 1.5" fill="none" stroke="#111" stroke-width="1.8"/></svg>
<div class="t " style="left:788px;top:239.00px;font-size:12.3px;color:#000;">3491000000049080804</div>
<div class="a" style="left:233px;top:255px;width:690px;height:21px;background:#efefef"></div>
<div class="a" style="left:233px;top:275px;width:690px;height:1px;background:#a9a9a9"></div>
<div class="t " style="left:-29px;width:300px;text-align:right;top:260.00px;font-size:12.3px;color:#000;">2024</div>
<div class="t " style="left:5px;width:300px;text-align:right;top:260.00px;font-size:12.3px;color:#000;">02</div>
<div class="t " style="left:40px;width:300px;text-align:right;top:260.00px;font-size:12.3px;color:#000;">2</div>
<div class="a" style="left:344px;top:255px;width:224px;height:20px;overflow:hidden"><div class="t" style="left:2px;top:5px;font-size:12.3px;color:#000;transform:scaleX(0.93);transform-origin:0 0">NAKNADA ZA PREVOZ-FEBRUAR</div></div>
<div class="t " style="left:572px;top:260.00px;font-size:12.3px;color:#000;">29.02.24</div>
<svg class="a" style="left:652px;top:259px;" width="16" height="14" viewBox="0 0 16 14"><path d="M1.5 7.5l4.5 4.5L15 2" fill="none" stroke="#8ca6d0" stroke-width="2.4"/></svg>
<div class="t " style="left:673px;top:260.00px;font-size:12.8px;color:#000;">Potvrđen</div>
<div class="a" style="left:754px;top:259px;width:12px;height:12px;border:1px solid #222;background:#fff"></div>
<svg class="a" style="left:755px;top:260px;" width="10" height="10" viewBox="0 0 10 10"><path d="M1.5 5l2.5 3L8.5 1.5" fill="none" stroke="#111" stroke-width="1.8"/></svg>
<div class="t " style="left:788px;top:260.00px;font-size:12.3px;color:#000;">1691000000049260551</div>
<div class="a" style="left:233px;top:276px;width:690px;height:21px;background:#fff"></div>
<div class="a" style="left:233px;top:296px;width:690px;height:1px;background:#a9a9a9"></div>
<div class="t " style="left:-29px;width:300px;text-align:right;top:281.00px;font-size:12.3px;color:#000;">2024</div>
<div class="t " style="left:5px;width:300px;text-align:right;top:281.00px;font-size:12.3px;color:#000;">03</div>
<div class="t " style="left:40px;width:300px;text-align:right;top:281.00px;font-size:12.3px;color:#000;">1</div>
<div class="a" style="left:344px;top:276px;width:224px;height:20px;overflow:hidden"><div class="t" style="left:2px;top:5px;font-size:12.3px;color:#000;transform:scaleX(0.93);transform-origin:0 0">NAKNADA ZA PREVOZ-ZORAN RADOSAVLJEVIĆ</div></div>
<div class="t " style="left:572px;top:281.00px;font-size:12.3px;color:#000;">31.03.24</div>
<svg class="a" style="left:652px;top:278px;" width="16" height="16" viewBox="0 0 16 16"><rect x="0" y="0" width="16" height="16" rx="1.5" fill="#8e5cba"/><rect x="3" y="1.5" width="11" height="6.5" fill="#fff"/><path d="M4.5 3.5h8M4.5 5.5h8" stroke="#cfcfcf"/><rect x="3.5" y="10" width="9.5" height="5" fill="#fff"/><rect x="6" y="10" width="2" height="3" fill="#8e5cba"/></svg>
<div class="t" style="left:673px;top:281px;font-size:12.8px;color:#000;transform:scaleX(0.92);transform-origin:0 0">Arhiviran</div>
<div class="a" style="left:754px;top:280px;width:12px;height:12px;border:1px solid #222;background:#fff"></div>
<svg class="a" style="left:755px;top:281px;" width="10" height="10" viewBox="0 0 10 10"><path d="M1.5 5l2.5 3L8.5 1.5" fill="none" stroke="#111" stroke-width="1.8"/></svg>
<div class="t " style="left:788px;top:281.00px;font-size:12.3px;color:#000;">0891000000049578940</div>
<div class="a" style="left:233px;top:297px;width:690px;height:21px;background:#e3e3e3"></div>
<div class="a" style="left:233px;top:317px;width:690px;height:1px;background:#a9a9a9"></div>
<div class="t " style="left:-29px;width:300px;text-align:right;top:302.00px;font-size:12.3px;color:#000;">2024</div>
<div class="t " style="left:5px;width:300px;text-align:right;top:302.00px;font-size:12.3px;color:#000;">06</div>
<div class="t " style="left:40px;width:300px;text-align:right;top:302.00px;font-size:12.3px;color:#000;">1</div>
<div class="a" style="left:344px;top:297px;width:224px;height:20px;overflow:hidden"><div class="t" style="left:2px;top:5px;font-size:12.3px;color:#000;transform:scaleX(0.93);transform-origin:0 0">NAKNADA PREVOZA</div></div>
<div class="t " style="left:572px;top:302.00px;font-size:12.3px;color:#000;">30.07.24</div>
<svg class="a" style="left:632px;top:302px;" width="10" height="10" viewBox="0 0 10 10"><path d="M5 0v10M0 5h10" stroke="#e0141c" stroke-width="2"/></svg>
<svg class="a" style="left:652px;top:301px;" width="16" height="14" viewBox="0 0 16 14"><path d="M1.5 7.5l4.5 4.5L15 2" fill="none" stroke="#8ca6d0" stroke-width="2.4"/></svg>
<div class="t " style="left:673px;top:302.00px;font-size:12.8px;color:#000;">Potvrđen</div>
<div class="a" style="left:754px;top:301px;width:12px;height:12px;border:1px solid #222;background:#fff"></div>
<svg class="a" style="left:755px;top:302px;" width="10" height="10" viewBox="0 0 10 10"><path d="M1.5 5l2.5 3L8.5 1.5" fill="none" stroke="#111" stroke-width="1.8"/></svg>
<div class="t " style="left:788px;top:302.00px;font-size:12.3px;color:#000;">0891000000049578940</div>
<div class="a" style="left:274px;top:150px;width:1px;height:168px;background:#a9a9a9"></div>
<div class="a" style="left:308px;top:150px;width:1px;height:168px;background:#a9a9a9"></div>
<div class="a" style="left:343px;top:150px;width:1px;height:168px;background:#a9a9a9"></div>
<div class="a" style="left:569px;top:150px;width:1px;height:168px;background:#a9a9a9"></div>
<div class="a" style="left:647px;top:150px;width:1px;height:168px;background:#a9a9a9"></div>
<div class="a" style="left:734px;top:150px;width:1px;height:168px;background:#a9a9a9"></div>
<div class="a" style="left:785px;top:150px;width:1px;height:168px;background:#a9a9a9"></div>
<div class="a" style="left:923px;top:150px;width:1px;height:168px;background:#a9a9a9"></div>
<div class="a" style="left:925px;top:128px;width:19px;height:220px;background:#f0f0f0"></div>
<div class="a" style="left:926px;top:262px;width:17px;height:46px;background:#c9c9c9"></div>
<svg class="a" style="left:929px;top:133px;" width="11" height="7" viewBox="0 0 11 7"><path d="M2 6l3.5-3.5L9 6" fill="none" stroke="#505050" stroke-width="2.2"/></svg>
<svg class="a" style="left:929px;top:314px;" width="11" height="7" viewBox="0 0 11 7"><path d="M2 1.5l3.5 3.5L9 1.5" fill="none" stroke="#505050" stroke-width="2.2"/></svg>
<div class="a" style="left:233px;top:327px;width:692px;height:21px;background:#f0f0f0"></div>
<div class="a" style="left:234px;top:328px;width:17px;height:19px;background:#d9d9d9"></div>
<div class="a" style="left:253px;top:328px;width:17px;height:19px;background:#d9d9d9"></div>
<div class="a" style="left:272px;top:328px;width:17px;height:19px;background:#d9d9d9"></div>
<div class="a" style="left:355px;top:328px;width:17px;height:19px;background:#e8e8e8"></div>
<div class="a" style="left:374px;top:328px;width:17px;height:19px;background:#e8e8e8"></div>
<div class="a" style="left:393px;top:328px;width:17px;height:19px;background:#e8e8e8"></div>
<div class="a" style="left:412px;top:328px;width:17px;height:19px;background:#e8e8e8"></div>
<div class="a" style="left:431px;top:328px;width:17px;height:19px;background:#e8e8e8"></div>
<div class="a" style="left:450px;top:328px;width:17px;height:19px;background:#e8e8e8"></div>
<div class="a" style="left:469px;top:328px;width:17px;height:19px;background:#e8e8e8"></div>
<div class="a" style="left:488px;top:328px;width:17px;height:19px;background:#e8e8e8"></div>
<div class="a" style="left:507px;top:328px;width:17px;height:19px;background:#d6d6d6"></div>
<div class="a" style="left:526px;top:328px;width:17px;height:19px;background:#d6d6d6"></div>
<div class="a" style="left:545px;top:328px;width:17px;height:19px;background:#e8e8e8"></div>
<div class="a" style="left:564px;top:328px;width:17px;height:19px;background:#d6d6d6"></div>
<div class="a" style="left:290px;top:328px;width:64px;height:19px;background:#f3f3f3"></div>
<div class="t " style="left:297px;top:333.00px;font-size:12.6px;color:#000;">28 od 28</div>
<svg class="a" style="left:233px;top:328px;" width="18" height="19" viewBox="0 0 18 19"><path d="M4 6v9" stroke="#333" stroke-width="1.6"/><path d="M10 6.5v8L5.5 10.5zM14.5 6.5v8L10 10.5z" fill="#333"/></svg>
<svg class="a" style="left:252px;top:328px;" width="18" height="19" viewBox="0 0 18 19"><path d="M9 6.5v8L4.5 10.5zM13.5 6.5v8L9 10.5z" fill="#333"/></svg>
<svg class="a" style="left:271px;top:328px;" width="18" height="19" viewBox="0 0 18 19"><path d="M11 7v7L7 10.5z" fill="#333"/></svg>
<svg class="a" style="left:355px;top:328px;" width="18" height="19" viewBox="0 0 18 19"><path d="M7 7v7l4-3.5z" fill="#a8a8a8"/></svg>
<svg class="a" style="left:374px;top:328px;" width="18" height="19" viewBox="0 0 18 19"><path d="M4.5 6.5v8L9 10.5zM9 6.5v8l4.5-4z" fill="#a8a8a8"/></svg>
<svg class="a" style="left:393px;top:328px;" width="18" height="19" viewBox="0 0 18 19"><path d="M3.5 6.5v8L8 10.5zM8 6.5v8l4.5-4z" fill="#a8a8a8"/><path d="M14 6v9" stroke="#a8a8a8" stroke-width="1.6"/></svg>
<svg class="a" style="left:412px;top:328px;" width="18" height="19" viewBox="0 0 18 19"><path d="M9 4v13M2.5 10.5h13" stroke="#c4c4c4" stroke-width="2"/></svg>
<svg class="a" style="left:431px;top:328px;" width="18" height="19" viewBox="0 0 18 19"><path d="M2.5 10.5h13" stroke="#c4c4c4" stroke-width="2"/></svg>
<svg class="a" style="left:450px;top:328px;" width="18" height="19" viewBox="0 0 18 19"><path d="M5 12.5l4-4.5 4 4.5z" fill="#c4c4c4"/></svg>
<svg class="a" style="left:469px;top:328px;" width="18" height="19" viewBox="0 0 18 19"><path d="M3 10.5l4 4 8-8" fill="none" stroke="#c4c4c4" stroke-width="1.8"/></svg>
<svg class="a" style="left:488px;top:328px;" width="18" height="19" viewBox="0 0 18 19"><path d="M5 6.5l8 8M13 6.5l-8 8" stroke="#c4c4c4" stroke-width="1.6"/></svg>
<svg class="a" style="left:507px;top:328px;" width="18" height="19" viewBox="0 0 18 19"><path d="M3 15c0-5 3-7 9-7" fill="none" stroke="#222" stroke-width="2.6"/><path d="M11 3.5l5 4.5-5 4.5z" fill="#222"/></svg>
<svg class="a" style="left:526px;top:328px;" width="18" height="19" viewBox="0 0 18 19"><g stroke="#111" stroke-width="2"><line x1="9" y1="5" x2="9" y2="16" transform="rotate(0 9 10.5)"/><line x1="9" y1="5" x2="9" y2="16" transform="rotate(45 9 10.5)"/><line x1="9" y1="5" x2="9" y2="16" transform="rotate(90 9 10.5)"/><line x1="9" y1="5" x2="9" y2="16" transform="rotate(135 9 10.5)"/></g></svg>
<svg class="a" style="left:545px;top:328px;" width="18" height="19" viewBox="0 0 18 19"><g stroke="#666" stroke-width="1.6"><line x1="9" y1="5.5" x2="9" y2="15.5" transform="rotate(0 9 10.5)"/><line x1="9" y1="5.5" x2="9" y2="15.5" transform="rotate(45 9 10.5)"/><line x1="9" y1="5.5" x2="9" y2="15.5" transform="rotate(90 9 10.5)"/><line x1="9" y1="5.5" x2="9" y2="15.5" transform="rotate(135 9 10.5)"/></g><path d="M3 3l1.5 3" stroke="#555"/></svg>
<svg class="a" style="left:564px;top:328px;" width="18" height="19" viewBox="0 0 18 19"><path d="M2 4h14l-5 6v6l-4-2v-4z" fill="#f07f0c"/></svg>
<svg class="a" style="left:643px;top:332px;" width="7" height="11" viewBox="0 0 7 11"><path d="M5.5 2L2 5.5 5.5 9" fill="none" stroke="#bbb" stroke-width="2.2"/></svg>
<svg class="a" style="left:913px;top:332px;" width="7" height="11" viewBox="0 0 7 11"><path d="M1.5 2l3.5 3.5L1.5 9" fill="none" stroke="#bbb" stroke-width="2.2"/></svg>
<div class="a" style="left:946px;top:127px;width:743px;height:222px;background:#fff;border:1px solid #1b3d9c"></div>
<div class="a" style="left:947px;top:128px;width:722px;height:21px;background:#f0f0f0"></div>
<div class="a" style="left:947px;top:149px;width:722px;height:1px;background:#7ea2dc"></div>
<div class="a" style="left:947px;top:128px;width:722px;height:20px;overflow:hidden"><div class="t " style="left:3px;top:6.00px;font-size:12.8px;color:#000;">Šifra</div><div class="t " style="left:43px;top:6.00px;font-size:12.8px;color:#000;">Opis ličnog primanja</div><div class="t " style="left:467px;top:6.00px;font-size:12.8px;color:#000;">Neoporez...</div><div class="t " style="left:541px;top:6.00px;font-size:12.8px;color:#000;">Procenat ...</div><div class="t " style="left:615px;top:6.00px;font-size:12.8px;color:#000;">RN Dug.</div><div class="t " style="left:689px;top:6.00px;font-size:12.8px;color:#000;">RN Po</div></div>
<div class="a" style="left:987px;top:131px;width:1px;height:16px;background:#7ea2dc"></div>
<div class="a" style="left:1411px;top:131px;width:1px;height:16px;background:#7ea2dc"></div>
<div class="a" style="left:1485px;top:131px;width:1px;height:16px;background:#7ea2dc"></div>
<div class="a" style="left:1559px;top:131px;width:1px;height:16px;background:#7ea2dc"></div>
<div class="a" style="left:1633px;top:131px;width:1px;height:16px;background:#7ea2dc"></div>
<div class="a" style="left:947px;top:128px;width:722px;height:201px;overflow:hidden"><div class="a" style="left:0px;top:22px;width:722px;height:18px;background:#e3e3e3"></div><div class="a" style="left:0px;top:22px;width:40px;height:18px;background:#fff"></div><div class="a" style="left:0px;top:40px;width:722px;height:1px;background:#a9a9a9"></div><div class="t " style="left:-263px;width:300px;text-align:right;top:26.00px;font-size:12.3px;color:#000;">1</div><div class="a" style="left:41px;top:22px;width:423px;height:19px;overflow:hidden"><div class="t" style="left:2px;top:4px;font-size:12.3px;color:#000;transform:scaleX(0.99);transform-origin:0 0">NAKNADA TROŠKOVA PREVOZA U JAVNOM SAOBRAĆAJU (ČL. 18. ST. 1. T. 1.)</div></div><div class="t " style="left:235px;width:300px;text-align:right;top:26.00px;font-size:12.3px;color:#000;">0,00</div><div class="t " style="left:309px;width:300px;text-align:right;top:26.00px;font-size:12.3px;color:#000;">10,00</div><div class="t " style="left:614px;top:26.00px;font-size:12.3px;color:#000;">5296</div><div class="t " style="left:688px;top:26.00px;font-size:12.3px;color:#000;">4636</div><div class="a" style="left:0px;top:41px;width:722px;height:18px;background:#efefef"></div><div class="a" style="left:0px;top:59px;width:722px;height:1px;background:#a9a9a9"></div><div class="t " style="left:-263px;width:300px;text-align:right;top:45.00px;font-size:12.3px;color:#000;">2</div><div class="a" style="left:41px;top:41px;width:423px;height:19px;overflow:hidden"><div class="t" style="left:2px;top:4px;font-size:12.3px;color:#000;transform:scaleX(0.99);transform-origin:0 0">DNEVNICE ZA SLUŽBENO PUTOVANJE U ZEMLJI (ČL. ST1. T. 2.)</div></div><div class="t " style="left:235px;width:300px;text-align:right;top:45.00px;font-size:12.3px;color:#000;">2.394,00</div><div class="t " style="left:309px;width:300px;text-align:right;top:45.00px;font-size:12.3px;color:#000;">10,00</div><div class="t " style="left:614px;top:45.00px;font-size:12.3px;color:#000;">5292</div><div class="t " style="left:688px;top:45.00px;font-size:12.3px;color:#000;">4632</div><div class="a" style="left:0px;top:60px;width:722px;height:18px;background:#fff"></div><div class="a" style="left:0px;top:78px;width:722px;height:1px;background:#a9a9a9"></div><div class="t " style="left:-263px;width:300px;text-align:right;top:64.00px;font-size:12.3px;color:#000;">3</div><div class="a" style="left:41px;top:60px;width:423px;height:19px;overflow:hidden"><div class="t" style="left:2px;top:4px;font-size:12.3px;color:#000;transform:scaleX(0.99);transform-origin:0 0">NAKNADA TROŠKOVA SMESTAJA NA SLUŽBENOM PUTOVANJU (ČL. 18. ST.1. T.3)</div></div><div class="t " style="left:235px;width:300px;text-align:right;top:64.00px;font-size:12.3px;color:#000;">0,00</div><div class="t " style="left:309px;width:300px;text-align:right;top:64.00px;font-size:12.3px;color:#000;">10,00</div><div class="t " style="left:614px;top:64.00px;font-size:12.3px;color:#000;">5292</div><div class="t " style="left:688px;top:64.00px;font-size:12.3px;color:#000;">4632</div><div class="a" style="left:0px;top:79px;width:722px;height:18px;background:#efefef"></div><div class="a" style="left:0px;top:97px;width:722px;height:1px;background:#a9a9a9"></div><div class="t " style="left:-263px;width:300px;text-align:right;top:83.00px;font-size:12.3px;color:#000;">4</div><div class="a" style="left:41px;top:79px;width:423px;height:19px;overflow:hidden"><div class="t" style="left:2px;top:4px;font-size:12.3px;color:#000;transform:scaleX(0.99);transform-origin:0 0">NAKNADA TROŠKOVA PREVOZA NA SLUŽBENOM PUTOVANJU (ČL. 18. ST.1. T.4)</div></div><div class="t " style="left:235px;width:300px;text-align:right;top:83.00px;font-size:12.3px;color:#000;">0,00</div><div class="t " style="left:309px;width:300px;text-align:right;top:83.00px;font-size:12.3px;color:#000;">10,00</div><div class="t " style="left:614px;top:83.00px;font-size:12.3px;color:#000;">5299</div><div class="t " style="left:688px;top:83.00px;font-size:12.3px;color:#000;">4639</div><div class="a" style="left:0px;top:98px;width:722px;height:18px;background:#fff"></div><div class="a" style="left:0px;top:116px;width:722px;height:1px;background:#a9a9a9"></div><div class="t " style="left:-263px;width:300px;text-align:right;top:102.00px;font-size:12.3px;color:#000;">5</div><div class="a" style="left:41px;top:98px;width:423px;height:19px;overflow:hidden"><div class="t" style="left:2px;top:4px;font-size:12.3px;color:#000;transform:scaleX(0.99);transform-origin:0 0">SOLIDARNA POMOĆ &nbsp; (ČL. 18. ST.1. T. 5.)</div></div><div class="t " style="left:235px;width:300px;text-align:right;top:102.00px;font-size:12.3px;color:#000;">39.881,00</div><div class="t " style="left:309px;width:300px;text-align:right;top:102.00px;font-size:12.3px;color:#000;">10,00</div><div class="t " style="left:614px;top:102.00px;font-size:12.3px;color:#000;">5299</div><div class="t " style="left:688px;top:102.00px;font-size:12.3px;color:#000;">4631</div><div class="a" style="left:0px;top:117px;width:722px;height:18px;background:#efefef"></div><div class="a" style="left:0px;top:135px;width:722px;height:1px;background:#a9a9a9"></div><div class="t " style="left:-263px;width:300px;text-align:right;top:121.00px;font-size:12.3px;color:#000;">6</div><div class="a" style="left:41px;top:117px;width:423px;height:19px;overflow:hidden"><div class="t" style="left:2px;top:4px;font-size:12.3px;color:#000;transform:scaleX(0.99);transform-origin:0 0">POKLON DECI ZAPOSLENIH, STAROSTI DO 15 GODINA (ČL. 18. ST.1. T. 6.)</div></div><div class="t " style="left:235px;width:300px;text-align:right;top:121.00px;font-size:12.3px;color:#000;">9.970,00</div><div class="t " style="left:309px;width:300px;text-align:right;top:121.00px;font-size:12.3px;color:#000;">10,00</div><div class="t " style="left:614px;top:121.00px;font-size:12.3px;color:#000;">5299</div><div class="t " style="left:688px;top:121.00px;font-size:12.3px;color:#000;">4639</div><div class="a" style="left:0px;top:136px;width:722px;height:18px;background:#fff"></div><div class="a" style="left:0px;top:154px;width:722px;height:1px;background:#a9a9a9"></div><div class="t " style="left:-263px;width:300px;text-align:right;top:140.00px;font-size:12.3px;color:#000;">7</div><div class="a" style="left:41px;top:136px;width:423px;height:19px;overflow:hidden"><div class="t" style="left:2px;top:4px;font-size:12.3px;color:#000;transform:scaleX(0.99);transform-origin:0 0">JUBILARNA NAGRADA &nbsp;(ČL. 18. ST.1. T. 8)</div></div><div class="t " style="left:235px;width:300px;text-align:right;top:140.00px;font-size:12.3px;color:#000;">19.939,00</div><div class="t " style="left:309px;width:300px;text-align:right;top:140.00px;font-size:12.3px;color:#000;">10,00</div><div class="t " style="left:614px;top:140.00px;font-size:12.3px;color:#000;">5291</div><div class="t " style="left:688px;top:140.00px;font-size:12.3px;color:#000;">4639</div><div class="a" style="left:0px;top:155px;width:722px;height:18px;background:#efefef"></div><div class="a" style="left:0px;top:173px;width:722px;height:1px;background:#a9a9a9"></div><div class="t " style="left:-263px;width:300px;text-align:right;top:159.00px;font-size:12.3px;color:#000;">8</div><div class="a" style="left:41px;top:155px;width:423px;height:19px;overflow:hidden"><div class="t" style="left:2px;top:4px;font-size:12.3px;color:#000;transform:scaleX(0.99);transform-origin:0 0">OSTALO</div></div><div class="t " style="left:235px;width:300px;text-align:right;top:159.00px;font-size:12.3px;color:#000;">0,00</div><div class="t " style="left:309px;width:300px;text-align:right;top:159.00px;font-size:12.3px;color:#000;">10,00</div><div class="t " style="left:614px;top:159.00px;font-size:12.3px;color:#000;">5299</div><div class="t " style="left:688px;top:159.00px;font-size:12.3px;color:#000;">4639</div><div class="a" style="left:0px;top:174px;width:722px;height:18px;background:#fff"></div><div class="a" style="left:0px;top:192px;width:722px;height:1px;background:#a9a9a9"></div><div class="t " style="left:-263px;width:300px;text-align:right;top:178.00px;font-size:12.3px;color:#000;">10</div><div class="a" style="left:41px;top:174px;width:423px;height:19px;overflow:hidden"><div class="t" style="left:2px;top:4px;font-size:12.3px;color:#000;transform:scaleX(0.99);transform-origin:0 0">NAKNADE TROŠKOVA SMEŠTAJA NA SLUŽBENOM PUTOVANJU, PREMA PRIHODU</div></div><div class="t " style="left:235px;width:300px;text-align:right;top:178.00px;font-size:12.3px;color:#000;">0,00</div><div class="t " style="left:309px;width:300px;text-align:right;top:178.00px;font-size:12.3px;color:#000;">10,00</div><div class="t " style="left:614px;top:178.00px;font-size:12.3px;color:#000;">5294</div><div class="t " style="left:688px;top:178.00px;font-size:12.3px;color:#000;">4634</div><div class="a" style="left:0px;top:193px;width:722px;height:18px;background:#efefef"></div><div class="a" style="left:0px;top:211px;width:722px;height:1px;background:#a9a9a9"></div><div class="t " style="left:-263px;width:300px;text-align:right;top:197.00px;font-size:12.3px;color:#000;">11</div><div class="a" style="left:41px;top:193px;width:423px;height:19px;overflow:hidden"><div class="t" style="left:2px;top:4px;font-size:12.3px;color:#000;transform:scaleX(0.99);transform-origin:0 0">DNEVNE NAKNADE KOJE OSTVARUJU PRIPADNICI VOJSKE SRBIJE U VEZI S</div></div><div class="t " style="left:235px;width:300px;text-align:right;top:197.00px;font-size:12.3px;color:#000;">0,00</div><div class="t " style="left:309px;width:300px;text-align:right;top:197.00px;font-size:12.3px;color:#000;">10,00</div><div class="t " style="left:614px;top:197.00px;font-size:12.3px;color:#000;">5299</div><div class="t " style="left:688px;top:197.00px;font-size:12.3px;color:#000;">4639</div><div class="a" style="left:40px;top:21px;width:1px;height:180px;background:#a9a9a9"></div><div class="a" style="left:464px;top:21px;width:1px;height:180px;background:#a9a9a9"></div><div class="a" style="left:538px;top:21px;width:1px;height:180px;background:#a9a9a9"></div><div class="a" style="left:612px;top:21px;width:1px;height:180px;background:#a9a9a9"></div><div class="a" style="left:686px;top:21px;width:1px;height:180px;background:#a9a9a9"></div></div>
<div class="a" style="left:1669px;top:128px;width:19px;height:201px;background:#f0f0f0"></div>
<div class="a" style="left:1670px;top:147px;width:17px;height:104px;background:#c9c9c9"></div>
<svg class="a" style="left:1673px;top:133px;" width="11" height="7" viewBox="0 0 11 7"><path d="M2 6l3.5-3.5L9 6" fill="none" stroke="#505050" stroke-width="2.2"/></svg>
<svg class="a" style="left:1673px;top:315px;" width="11" height="7" viewBox="0 0 11 7"><path d="M2 1.5l3.5 3.5L9 1.5" fill="none" stroke="#505050" stroke-width="2.2"/></svg>
<div class="a" style="left:947px;top:329px;width:741px;height:19px;background:#f0f0f0"></div>
<div class="a" style="left:966px;top:330px;width:591px;height:17px;background:#c9c9c9"></div>
<svg class="a" style="left:953px;top:333px;" width="7" height="11" viewBox="0 0 7 11"><path d="M5.5 2L2 5.5 5.5 9" fill="none" stroke="#555" stroke-width="2.2"/></svg>
<svg class="a" style="left:1656px;top:333px;" width="7" height="11" viewBox="0 0 7 11"><path d="M1.5 2l3.5 3.5L1.5 9" fill="none" stroke="#555" stroke-width="2.2"/></svg>
<div class="a" style="left:231px;top:349px;width:1459px;height:33px;background:#f0f0f0"></div>
<div class="a" style="left:231px;top:349px;width:1459px;height:1px;background:#cfcfcf"></div>
<div class="a" style="left:357px;top:351px;width:102px;height:30px;background:linear-gradient(#f8f8f8,#ececec);border:1px solid #dcdcdc"></div>
<div class="a" style="left:461px;top:351px;width:160px;height:30px;background:linear-gradient(#f8f8f8,#ececec);border:1px solid #dcdcdc"></div>
<div class="a" style="left:623px;top:351px;width:724px;height:30px;background:linear-gradient(#f9f9f9,#ececec);border:1px solid #dcdcdc"></div>
<div class="a" style="left:1347px;top:351px;width:341px;height:30px;background:#ececec;border:1px solid #dcdcdc"></div>
<div class="a" style="left:235px;top:352px;width:120px;height:28px;background:#e1e1e1;border:1px solid #adadad;outline:1px solid #d6d6d6"></div>
<div class="t " style="left:239px;top:360.00px;font-size:13.5px;color:#000;">F6 - Novi obračun</div>
<div class="a" style="left:362px;top:360px;width:12px;height:12px;border:1px solid #333;background:#fff"></div>
<div class="t " style="left:381px;top:360.00px;font-size:12.8px;color:#000;">F2 - IZMENE</div>
<div class="a" style="left:466px;top:360px;width:12px;height:12px;border:1px solid #333;background:#fff"></div>
<div class="t " style="left:485px;top:360.00px;font-size:12.8px;color:#000;">Interaktivno knjiženje</div>
<div class="t " style="left:834.0px;width:300px;text-align:center;top:360.00px;font-size:12.8px;color:#000;">Datum valute - isplate</div>
<div class="a" style="left:1350px;top:352px;width:119px;height:28px;background:#e1e1e1;border:1px solid #adadad"></div>
<div class="t " style="left:1350.0px;width:119px;text-align:center;top:361.00px;font-size:12.8px;color:#000;">Kopiraj obračun</div>
<div class="a" style="left:1474px;top:352px;width:98px;height:28px;background:#e1e1e1;border:1px solid #adadad"></div>
<div class="t " style="left:1474.0px;width:98px;text-align:center;top:361.00px;font-size:12.8px;color:#000;">Prikaži arhivu</div>
<div class="a" style="left:1578px;top:352px;width:108px;height:28px;background:#e1e1e1;border:1px solid #adadad"></div>
<div class="t " style="left:1578.0px;width:108px;text-align:center;top:361.00px;font-size:12.8px;color:#000;">ARHIVIRAJ</div>
<div class="a" style="left:231px;top:382px;width:1459px;height:26px;background:#f0f0f0"></div>
<svg class="a" style="left:233px;top:383px;" width="187" height="24" viewBox="0 0 187 24"><path d="M0.5 24 V5.5 L5.5 0.5 H186.5 V24" fill="#f0f0f0" stroke="#c4c4c4"/><path d="M4 0 H187 V3 H1z" fill="#2b579a"/></svg><div class="t " style="left:239px;top:391.00px;font-size:12.8px;color:#000;">Obračun ostalih ličnih primanja</div>
<svg class="a" style="left:421px;top:385px;" width="171" height="22" viewBox="0 0 171 22"><defs><linearGradient id="tg4" x1="0" y1="0" x2="0" y2="1"><stop offset="0" stop-color="#fefefe"/><stop offset="1" stop-color="#e2e2e2"/></linearGradient></defs><path d="M0.5 22 V5.5 L5.5 0.5 H170.5 V22" fill="url(#tg4)" stroke="#b9b9b9"/></svg><div class="t " style="left:427px;top:391.00px;font-size:12.8px;color:#000;">Obrasci / Virmani / Izveštaji</div>
<svg class="a" style="left:593px;top:385px;" width="63" height="22" viewBox="0 0 63 22"><defs><linearGradient id="tg5" x1="0" y1="0" x2="0" y2="1"><stop offset="0" stop-color="#fefefe"/><stop offset="1" stop-color="#e2e2e2"/></linearGradient></defs><path d="M0.5 22 V5.5 L5.5 0.5 H62.5 V22" fill="url(#tg5)" stroke="#b9b9b9"/></svg><div class="t " style="left:599px;top:391.00px;font-size:12.8px;color:#000;">Knjiženja</div>
<svg class="a" style="left:657px;top:385px;" width="62" height="22" viewBox="0 0 62 22"><defs><linearGradient id="tg6" x1="0" y1="0" x2="0" y2="1"><stop offset="0" stop-color="#fefefe"/><stop offset="1" stop-color="#e2e2e2"/></linearGradient></defs><path d="M0.5 22 V5.5 L5.5 0.5 H61.5 V22" fill="url(#tg6)" stroke="#b9b9b9"/></svg><div class="t " style="left:663px;top:391.00px;font-size:12.8px;color:#000;">Događaji</div>
<svg class="a" style="left:720px;top:385px;" width="83" height="22" viewBox="0 0 83 22"><defs><linearGradient id="tg7" x1="0" y1="0" x2="0" y2="1"><stop offset="0" stop-color="#fefefe"/><stop offset="1" stop-color="#e2e2e2"/></linearGradient></defs><path d="M0.5 22 V5.5 L5.5 0.5 H82.5 V22" fill="url(#tg7)" stroke="#b9b9b9"/></svg><div class="t " style="left:726px;top:391.00px;font-size:12.8px;color:#000;">Polja po želji</div>
<svg class="a" style="left:804px;top:385px;" width="105" height="22" viewBox="0 0 105 22"><defs><linearGradient id="tg8" x1="0" y1="0" x2="0" y2="1"><stop offset="0" stop-color="#fefefe"/><stop offset="1" stop-color="#e2e2e2"/></linearGradient></defs><path d="M0.5 22 V5.5 L5.5 0.5 H104.5 V22" fill="url(#tg8)" stroke="#b9b9b9"/></svg><div class="t " style="left:810px;top:391.00px;font-size:12.8px;color:#000;">Vezni dokumenti</div>
<svg class="a" style="left:910px;top:385px;" width="82" height="22" viewBox="0 0 82 22"><defs><linearGradient id="tg9" x1="0" y1="0" x2="0" y2="1"><stop offset="0" stop-color="#fefefe"/><stop offset="1" stop-color="#e2e2e2"/></linearGradient></defs><path d="M0.5 22 V5.5 L5.5 0.5 H81.5 V22" fill="url(#tg9)" stroke="#b9b9b9"/></svg><div class="t " style="left:916px;top:391.00px;font-size:12.8px;color:#000;">Obaveštenja</div>
<div class="a" style="left:233px;top:407px;width:1455px;height:1px;background:#1b3d9c"></div>
<div class="a" style="left:232px;top:407px;width:1457px;height:567px;background:#fff;border:1px solid #1b3d9c"></div>
<div class="a" style="left:233px;top:408px;width:1436px;height:21px;background:#f0f0f0"></div>
<div class="a" style="left:233px;top:429px;width:1436px;height:1px;background:#7ea2dc"></div>
<div class="a" style="left:234px;top:409px;width:39px;height:20px;overflow:hidden"><div class="t " style="left:2px;top:5.00px;font-size:12.8px;color:#000;">Šif....</div></div>
<div class="a" style="left:275px;top:409px;width:272px;height:20px;overflow:hidden"><div class="t " style="left:2px;top:5.00px;font-size:12.8px;color:#000;">Naziv vrste primanja</div></div>
<div class="a" style="left:549px;top:409px;width:56px;height:20px;overflow:hidden"><div class="t " style="left:2px;top:5.00px;font-size:12.8px;color:#000;">Šifra</div></div>
<div class="a" style="left:607px;top:409px;width:177px;height:20px;overflow:hidden"><div class="t " style="left:2px;top:5.00px;font-size:12.8px;color:#000;">Prezime i ime</div></div>
<div class="a" style="left:786px;top:409px;width:78px;height:20px;overflow:hidden"><div class="t " style="left:2px;top:5.00px;font-size:12.8px;color:#000;">Za isplatu</div></div>
<div class="a" style="left:866px;top:409px;width:77px;height:20px;overflow:hidden"><div class="t " style="left:2px;top:5.00px;font-size:12.8px;color:#000;">Isplaćeno</div></div>
<div class="a" style="left:945px;top:409px;width:75px;height:20px;overflow:hidden"><div class="t " style="left:2px;top:5.00px;font-size:12.8px;color:#000;">Neoporezivo</div></div>
<div class="a" style="left:1022px;top:409px;width:76px;height:20px;overflow:hidden"><div class="t " style="left:2px;top:5.00px;font-size:12.8px;color:#000;">Neto Opor.</div></div>
<div class="a" style="left:1100px;top:409px;width:78px;height:20px;overflow:hidden"><div class="t " style="left:2px;top:5.00px;font-size:12.8px;color:#000;">Osnovica</div></div>
<div class="a" style="left:1180px;top:409px;width:57px;height:20px;overflow:hidden"><div class="t " style="left:2px;top:5.00px;font-size:12.8px;color:#000;">% Porez</div></div>
<div class="a" style="left:1239px;top:409px;width:73px;height:20px;overflow:hidden"><div class="t " style="left:2px;top:5.00px;font-size:12.8px;color:#000;">Porez iznos</div></div>
<div class="a" style="left:1314px;top:409px;width:64px;height:20px;overflow:hidden"><div class="t " style="left:2px;top:5.00px;font-size:12.8px;color:#000;">MestoTr.</div></div>
<div class="a" style="left:1380px;top:409px;width:64px;height:20px;overflow:hidden"><div class="t " style="left:2px;top:5.00px;font-size:12.8px;color:#000;">Nos.Tr.</div></div>
<div class="a" style="left:1446px;top:409px;width:71px;height:20px;overflow:hidden"><div class="t " style="left:2px;top:5.00px;font-size:12.8px;color:#000;">Nac.Isp.</div></div>
<div class="a" style="left:1519px;top:409px;width:149px;height:20px;overflow:hidden"><div class="t " style="left:2px;top:5.00px;font-size:12.8px;color:#000;">Opis isplate</div></div>
<div class="a" style="left:274px;top:411px;width:1px;height:17px;background:#7ea2dc"></div>
<div class="a" style="left:548px;top:411px;width:1px;height:17px;background:#7ea2dc"></div>
<div class="a" style="left:606px;top:411px;width:1px;height:17px;background:#7ea2dc"></div>
<div class="a" style="left:785px;top:411px;width:1px;height:17px;background:#7ea2dc"></div>
<div class="a" style="left:865px;top:411px;width:1px;height:17px;background:#7ea2dc"></div>
<div class="a" style="left:944px;top:411px;width:1px;height:17px;background:#7ea2dc"></div>
<div class="a" style="left:1021px;top:411px;width:1px;height:17px;background:#7ea2dc"></div>
<div class="a" style="left:1099px;top:411px;width:1px;height:17px;background:#7ea2dc"></div>
<div class="a" style="left:1179px;top:411px;width:1px;height:17px;background:#7ea2dc"></div>
<div class="a" style="left:1238px;top:411px;width:1px;height:17px;background:#7ea2dc"></div>
<div class="a" style="left:1313px;top:411px;width:1px;height:17px;background:#7ea2dc"></div>
<div class="a" style="left:1379px;top:411px;width:1px;height:17px;background:#7ea2dc"></div>
<div class="a" style="left:1445px;top:411px;width:1px;height:17px;background:#7ea2dc"></div>
<div class="a" style="left:1518px;top:411px;width:1px;height:17px;background:#7ea2dc"></div>
<div class="a" style="left:233px;top:430px;width:1436px;height:495px;overflow:hidden"><div class="a" style="left:0px;top:0px;width:1436px;height:21px;background:#e3e3e3"></div><div class="a" style="left:315px;top:0px;width:58px;height:20px;background:#fff"></div><div class="a" style="left:0px;top:20px;width:1436px;height:1px;background:#a9a9a9"></div><div class="t " style="left:-262px;width:300px;text-align:right;top:5.00px;font-size:12.3px;color:#000;">001</div><div class="a" style="left:42px;top:0px;width:272px;height:20px;overflow:hidden"><div class="t" style="left:2px;top:5px;font-size:12.3px;color:#000;transform:scaleX(0.94);transform-origin:0 0">NAKNADA TROŠKOVA PREVOZA U JAVNOM SAO</div></div><div class="t " style="left:71px;width:300px;text-align:right;top:5.00px;font-size:12.3px;color:#000;">000002</div><div class="a" style="left:374px;top:0px;width:177px;height:20px;overflow:hidden"><div class="t" style="left:2px;top:5px;font-size:12.3px;color:#000;transform:scaleX(0.9);transform-origin:0 0">LAZIĆ MILAN</div></div><div class="t " style="left:329px;width:300px;text-align:right;top:5.00px;font-size:12.3px;color:#000;">3.275,00</div><div class="t " style="left:409px;width:300px;text-align:right;top:5.00px;font-size:12.3px;color:#000;">0,00</div><div class="t " style="left:486px;width:300px;text-align:right;top:5.00px;font-size:12.3px;color:#000;">0,00</div><div class="t " style="left:564px;width:300px;text-align:right;top:5.00px;font-size:12.3px;color:#000;">3.275,00</div><div class="t " style="left:644px;width:300px;text-align:right;top:5.00px;font-size:12.3px;color:#000;">3.638,89</div><div class="t " style="left:703px;width:300px;text-align:right;top:5.00px;font-size:12.3px;color:#000;">10,00</div><div class="t " style="left:778px;width:300px;text-align:right;top:5.00px;font-size:12.3px;color:#000;">363,89</div><div class="t " style="left:1215px;top:5.00px;font-size:12.3px;color:#000;">1 - Novac</div><div class="a" style="left:1286px;top:0px;width:149px;height:20px;overflow:hidden"><div class="t" style="left:2px;top:5px;font-size:12.3px;color:#000;transform:scaleX(0.94);transform-origin:0 0">NAKNADA TROŠKOVA PRE\</div></div><div class="a" style="left:0px;top:21px;width:1436px;height:21px;background:#efefef"></div><div class="a" style="left:0px;top:41px;width:1436px;height:1px;background:#a9a9a9"></div><div class="t " style="left:-262px;width:300px;text-align:right;top:26.00px;font-size:12.3px;color:#000;">001</div><div class="a" style="left:42px;top:21px;width:272px;height:20px;overflow:hidden"><div class="t" style="left:2px;top:5px;font-size:12.3px;color:#000;transform:scaleX(0.94);transform-origin:0 0">NAKNADA TROŠKOVA PREVOZA U JAVNOM SAO</div></div><div class="t " style="left:71px;width:300px;text-align:right;top:26.00px;font-size:12.3px;color:#000;">000002</div><div class="a" style="left:374px;top:21px;width:177px;height:20px;overflow:hidden"><div class="t" style="left:2px;top:5px;font-size:12.3px;color:#000;transform:scaleX(0.9);transform-origin:0 0">LAZIĆ MILAN</div></div><div class="t " style="left:329px;width:300px;text-align:right;top:26.00px;font-size:12.3px;color:#000;">3.275,00</div><div class="t " style="left:409px;width:300px;text-align:right;top:26.00px;font-size:12.3px;color:#000;">0,00</div><div class="t " style="left:486px;width:300px;text-align:right;top:26.00px;font-size:12.3px;color:#000;">0,00</div><div class="t " style="left:564px;width:300px;text-align:right;top:26.00px;font-size:12.3px;color:#000;">3.275,00</div><div class="t " style="left:644px;width:300px;text-align:right;top:26.00px;font-size:12.3px;color:#000;">3.638,89</div><div class="t " style="left:703px;width:300px;text-align:right;top:26.00px;font-size:12.3px;color:#000;">10,00</div><div class="t " style="left:778px;width:300px;text-align:right;top:26.00px;font-size:12.3px;color:#000;">363,89</div><div class="t " style="left:1215px;top:26.00px;font-size:12.3px;color:#000;">1 - Novac</div><div class="a" style="left:1286px;top:21px;width:149px;height:20px;overflow:hidden"><div class="t" style="left:2px;top:5px;font-size:12.3px;color:#000;transform:scaleX(0.94);transform-origin:0 0">NAKNADA TROŠKOVA PRE\</div></div><div class="a" style="left:0px;top:42px;width:1436px;height:21px;background:#fff"></div><div class="a" style="left:0px;top:62px;width:1436px;height:1px;background:#a9a9a9"></div><div class="t " style="left:-262px;width:300px;text-align:right;top:47.00px;font-size:12.3px;color:#000;">001</div><div class="a" style="left:42px;top:42px;width:272px;height:20px;overflow:hidden"><div class="t" style="left:2px;top:5px;font-size:12.3px;color:#000;transform:scaleX(0.94);transform-origin:0 0">NAKNADA TROŠKOVA PREVOZA U JAVNOM SAO</div></div><div class="t " style="left:71px;width:300px;text-align:right;top:47.00px;font-size:12.3px;color:#000;">000005</div><div class="a" style="left:374px;top:42px;width:177px;height:20px;overflow:hidden"><div class="t" style="left:2px;top:5px;font-size:12.3px;color:#000;transform:scaleX(0.9);transform-origin:0 0">GAJIĆ MILOŠ</div></div><div class="t " style="left:329px;width:300px;text-align:right;top:47.00px;font-size:12.3px;color:#000;">3.275,00</div><div class="t " style="left:409px;width:300px;text-align:right;top:47.00px;font-size:12.3px;color:#000;">0,00</div><div class="t " style="left:486px;width:300px;text-align:right;top:47.00px;font-size:12.3px;color:#000;">0,00</div><div class="t " style="left:564px;width:300px;text-align:right;top:47.00px;font-size:12.3px;color:#000;">3.275,00</div><div class="t " style="left:644px;width:300px;text-align:right;top:47.00px;font-size:12.3px;color:#000;">3.638,89</div><div class="t " style="left:703px;width:300px;text-align:right;top:47.00px;font-size:12.3px;color:#000;">10,00</div><div class="t " style="left:778px;width:300px;text-align:right;top:47.00px;font-size:12.3px;color:#000;">363,89</div><div class="t " style="left:1215px;top:47.00px;font-size:12.3px;color:#000;">1 - Novac</div><div class="a" style="left:1286px;top:42px;width:149px;height:20px;overflow:hidden"><div class="t" style="left:2px;top:5px;font-size:12.3px;color:#000;transform:scaleX(0.94);transform-origin:0 0">NAKNADA TROŠKOVA PRE\</div></div><div class="a" style="left:0px;top:63px;width:1436px;height:21px;background:#efefef"></div><div class="a" style="left:0px;top:83px;width:1436px;height:1px;background:#a9a9a9"></div><div class="t " style="left:-262px;width:300px;text-align:right;top:68.00px;font-size:12.3px;color:#000;">001</div><div class="a" style="left:42px;top:63px;width:272px;height:20px;overflow:hidden"><div class="t" style="left:2px;top:5px;font-size:12.3px;color:#000;transform:scaleX(0.94);transform-origin:0 0">NAKNADA TROŠKOVA PREVOZA U JAVNOM SAO</div></div><div class="t " style="left:71px;width:300px;text-align:right;top:68.00px;font-size:12.3px;color:#000;">000005</div><div class="a" style="left:374px;top:63px;width:177px;height:20px;overflow:hidden"><div class="t" style="left:2px;top:5px;font-size:12.3px;color:#000;transform:scaleX(0.9);transform-origin:0 0">GAJIĆ MILOŠ</div></div><div class="t " style="left:329px;width:300px;text-align:right;top:68.00px;font-size:12.3px;color:#000;">3.275,00</div><div class="t " style="left:409px;width:300px;text-align:right;top:68.00px;font-size:12.3px;color:#000;">0,00</div><div class="t " style="left:486px;width:300px;text-align:right;top:68.00px;font-size:12.3px;color:#000;">0,00</div><div class="t " style="left:564px;width:300px;text-align:right;top:68.00px;font-size:12.3px;color:#000;">3.275,00</div><div class="t " style="left:644px;width:300px;text-align:right;top:68.00px;font-size:12.3px;color:#000;">3.638,89</div><div class="t " style="left:703px;width:300px;text-align:right;top:68.00px;font-size:12.3px;color:#000;">10,00</div><div class="t " style="left:778px;width:300px;text-align:right;top:68.00px;font-size:12.3px;color:#000;">363,89</div><div class="t " style="left:1215px;top:68.00px;font-size:12.3px;color:#000;">1 - Novac</div><div class="a" style="left:1286px;top:63px;width:149px;height:20px;overflow:hidden"><div class="t" style="left:2px;top:5px;font-size:12.3px;color:#000;transform:scaleX(0.94);transform-origin:0 0">NAKNADA TROŠKOVA PRE\</div></div><div class="a" style="left:0px;top:84px;width:1436px;height:21px;background:#fff"></div><div class="a" style="left:0px;top:104px;width:1436px;height:1px;background:#a9a9a9"></div><div class="t " style="left:-262px;width:300px;text-align:right;top:89.00px;font-size:12.3px;color:#000;">001</div><div class="a" style="left:42px;top:84px;width:272px;height:20px;overflow:hidden"><div class="t" style="left:2px;top:5px;font-size:12.3px;color:#000;transform:scaleX(0.94);transform-origin:0 0">NAKNADA TROŠKOVA PREVOZA U JAVNOM SAO</div></div><div class="t " style="left:71px;width:300px;text-align:right;top:89.00px;font-size:12.3px;color:#000;">000006</div><div class="a" style="left:374px;top:84px;width:177px;height:20px;overflow:hidden"><div class="t" style="left:2px;top:5px;font-size:12.3px;color:#000;transform:scaleX(0.9);transform-origin:0 0">MARKOVIĆ JELENA</div></div><div class="t " style="left:329px;width:300px;text-align:right;top:89.00px;font-size:12.3px;color:#000;">3.275,00</div><div class="t " style="left:409px;width:300px;text-align:right;top:89.00px;font-size:12.3px;color:#000;">0,00</div><div class="t " style="left:486px;width:300px;text-align:right;top:89.00px;font-size:12.3px;color:#000;">0,00</div><div class="t " style="left:564px;width:300px;text-align:right;top:89.00px;font-size:12.3px;color:#000;">3.275,00</div><div class="t " style="left:644px;width:300px;text-align:right;top:89.00px;font-size:12.3px;color:#000;">3.638,89</div><div class="t " style="left:703px;width:300px;text-align:right;top:89.00px;font-size:12.3px;color:#000;">10,00</div><div class="t " style="left:778px;width:300px;text-align:right;top:89.00px;font-size:12.3px;color:#000;">363,89</div><div class="t " style="left:1215px;top:89.00px;font-size:12.3px;color:#000;">1 - Novac</div><div class="a" style="left:1286px;top:84px;width:149px;height:20px;overflow:hidden"><div class="t" style="left:2px;top:5px;font-size:12.3px;color:#000;transform:scaleX(0.94);transform-origin:0 0">NAKNADA TROŠKOVA PRE\</div></div><div class="a" style="left:0px;top:105px;width:1436px;height:21px;background:#efefef"></div><div class="a" style="left:0px;top:125px;width:1436px;height:1px;background:#a9a9a9"></div><div class="t " style="left:-262px;width:300px;text-align:right;top:110.00px;font-size:12.3px;color:#000;">001</div><div class="a" style="left:42px;top:105px;width:272px;height:20px;overflow:hidden"><div class="t" style="left:2px;top:5px;font-size:12.3px;color:#000;transform:scaleX(0.94);transform-origin:0 0">NAKNADA TROŠKOVA PREVOZA U JAVNOM SAO</div></div><div class="t " style="left:71px;width:300px;text-align:right;top:110.00px;font-size:12.3px;color:#000;">000006</div><div class="a" style="left:374px;top:105px;width:177px;height:20px;overflow:hidden"><div class="t" style="left:2px;top:5px;font-size:12.3px;color:#000;transform:scaleX(0.9);transform-origin:0 0">MARKOVIĆ JELENA</div></div><div class="t " style="left:329px;width:300px;text-align:right;top:110.00px;font-size:12.3px;color:#000;">3.275,00</div><div class="t " style="left:409px;width:300px;text-align:right;top:110.00px;font-size:12.3px;color:#000;">0,00</div><div class="t " style="left:486px;width:300px;text-align:right;top:110.00px;font-size:12.3px;color:#000;">0,00</div><div class="t " style="left:564px;width:300px;text-align:right;top:110.00px;font-size:12.3px;color:#000;">3.275,00</div><div class="t " style="left:644px;width:300px;text-align:right;top:110.00px;font-size:12.3px;color:#000;">3.638,89</div><div class="t " style="left:703px;width:300px;text-align:right;top:110.00px;font-size:12.3px;color:#000;">10,00</div><div class="t " style="left:778px;width:300px;text-align:right;top:110.00px;font-size:12.3px;color:#000;">363,89</div><div class="t " style="left:1215px;top:110.00px;font-size:12.3px;color:#000;">1 - Novac</div><div class="a" style="left:1286px;top:105px;width:149px;height:20px;overflow:hidden"><div class="t" style="left:2px;top:5px;font-size:12.3px;color:#000;transform:scaleX(0.94);transform-origin:0 0">NAKNADA TROŠKOVA PRE\</div></div><div class="a" style="left:0px;top:126px;width:1436px;height:21px;background:#fff"></div><div class="a" style="left:0px;top:146px;width:1436px;height:1px;background:#a9a9a9"></div><div class="t " style="left:-262px;width:300px;text-align:right;top:131.00px;font-size:12.3px;color:#000;">001</div><div class="a" style="left:42px;top:126px;width:272px;height:20px;overflow:hidden"><div class="t" style="left:2px;top:5px;font-size:12.3px;color:#000;transform:scaleX(0.94);transform-origin:0 0">NAKNADA TROŠKOVA PREVOZA U JAVNOM SAO</div></div><div class="t " style="left:71px;width:300px;text-align:right;top:131.00px;font-size:12.3px;color:#000;">000007</div><div class="a" style="left:374px;top:126px;width:177px;height:20px;overflow:hidden"><div class="t" style="left:2px;top:5px;font-size:12.3px;color:#000;transform:scaleX(0.9);transform-origin:0 0">NEDELJKOVIĆ SLOBODAN</div></div><div class="t " style="left:329px;width:300px;text-align:right;top:131.00px;font-size:12.3px;color:#000;">3.275,00</div><div class="t " style="left:409px;width:300px;text-align:right;top:131.00px;font-size:12.3px;color:#000;">0,00</div><div class="t " style="left:486px;width:300px;text-align:right;top:131.00px;font-size:12.3px;color:#000;">0,00</div><div class="t " style="left:564px;width:300px;text-align:right;top:131.00px;font-size:12.3px;color:#000;">3.275,00</div><div class="t " style="left:644px;width:300px;text-align:right;top:131.00px;font-size:12.3px;color:#000;">3.638,89</div><div class="t " style="left:703px;width:300px;text-align:right;top:131.00px;font-size:12.3px;color:#000;">10,00</div><div class="t " style="left:778px;width:300px;text-align:right;top:131.00px;font-size:12.3px;color:#000;">363,89</div><div class="t " style="left:1215px;top:131.00px;font-size:12.3px;color:#000;">1 - Novac</div><div class="a" style="left:1286px;top:126px;width:149px;height:20px;overflow:hidden"><div class="t" style="left:2px;top:5px;font-size:12.3px;color:#000;transform:scaleX(0.94);transform-origin:0 0">NAKNADA TROŠKOVA PRE\</div></div><div class="a" style="left:0px;top:147px;width:1436px;height:21px;background:#efefef"></div><div class="a" style="left:0px;top:167px;width:1436px;height:1px;background:#a9a9a9"></div><div class="t " style="left:-262px;width:300px;text-align:right;top:152.00px;font-size:12.3px;color:#000;">001</div><div class="a" style="left:42px;top:147px;width:272px;height:20px;overflow:hidden"><div class="t" style="left:2px;top:5px;font-size:12.3px;color:#000;transform:scaleX(0.94);transform-origin:0 0">NAKNADA TROŠKOVA PREVOZA U JAVNOM SAO</div></div><div class="t " style="left:71px;width:300px;text-align:right;top:152.00px;font-size:12.3px;color:#000;">000007</div><div class="a" style="left:374px;top:147px;width:177px;height:20px;overflow:hidden"><div class="t" style="left:2px;top:5px;font-size:12.3px;color:#000;transform:scaleX(0.9);transform-origin:0 0">NEDELJKOVIĆ SLOBODAN</div></div><div class="t " style="left:329px;width:300px;text-align:right;top:152.00px;font-size:12.3px;color:#000;">3.275,00</div><div class="t " style="left:409px;width:300px;text-align:right;top:152.00px;font-size:12.3px;color:#000;">0,00</div><div class="t " style="left:486px;width:300px;text-align:right;top:152.00px;font-size:12.3px;color:#000;">0,00</div><div class="t " style="left:564px;width:300px;text-align:right;top:152.00px;font-size:12.3px;color:#000;">3.275,00</div><div class="t " style="left:644px;width:300px;text-align:right;top:152.00px;font-size:12.3px;color:#000;">3.638,89</div><div class="t " style="left:703px;width:300px;text-align:right;top:152.00px;font-size:12.3px;color:#000;">10,00</div><div class="t " style="left:778px;width:300px;text-align:right;top:152.00px;font-size:12.3px;color:#000;">363,89</div><div class="t " style="left:1215px;top:152.00px;font-size:12.3px;color:#000;">1 - Novac</div><div class="a" style="left:1286px;top:147px;width:149px;height:20px;overflow:hidden"><div class="t" style="left:2px;top:5px;font-size:12.3px;color:#000;transform:scaleX(0.94);transform-origin:0 0">NAKNADA TROŠKOVA PRE\</div></div><div class="a" style="left:0px;top:168px;width:1436px;height:21px;background:#fff"></div><div class="a" style="left:0px;top:188px;width:1436px;height:1px;background:#a9a9a9"></div><div class="t " style="left:-262px;width:300px;text-align:right;top:173.00px;font-size:12.3px;color:#000;">001</div><div class="a" style="left:42px;top:168px;width:272px;height:20px;overflow:hidden"><div class="t" style="left:2px;top:5px;font-size:12.3px;color:#000;transform:scaleX(0.94);transform-origin:0 0">NAKNADA TROŠKOVA PREVOZA U JAVNOM SAO</div></div><div class="t " style="left:71px;width:300px;text-align:right;top:173.00px;font-size:12.3px;color:#000;">000008</div><div class="a" style="left:374px;top:168px;width:177px;height:20px;overflow:hidden"><div class="t" style="left:2px;top:5px;font-size:12.3px;color:#000;transform:scaleX(0.9);transform-origin:0 0">KOSTIĆ ANDRIJA</div></div><div class="t " style="left:329px;width:300px;text-align:right;top:173.00px;font-size:12.3px;color:#000;">3.275,00</div><div class="t " style="left:409px;width:300px;text-align:right;top:173.00px;font-size:12.3px;color:#000;">0,00</div><div class="t " style="left:486px;width:300px;text-align:right;top:173.00px;font-size:12.3px;color:#000;">0,00</div><div class="t " style="left:564px;width:300px;text-align:right;top:173.00px;font-size:12.3px;color:#000;">3.275,00</div><div class="t " style="left:644px;width:300px;text-align:right;top:173.00px;font-size:12.3px;color:#000;">3.638,89</div><div class="t " style="left:703px;width:300px;text-align:right;top:173.00px;font-size:12.3px;color:#000;">10,00</div><div class="t " style="left:778px;width:300px;text-align:right;top:173.00px;font-size:12.3px;color:#000;">363,89</div><div class="t " style="left:1215px;top:173.00px;font-size:12.3px;color:#000;">1 - Novac</div><div class="a" style="left:1286px;top:168px;width:149px;height:20px;overflow:hidden"><div class="t" style="left:2px;top:5px;font-size:12.3px;color:#000;transform:scaleX(0.94);transform-origin:0 0">NAKNADA TROŠKOVA PRE\</div></div><div class="a" style="left:0px;top:189px;width:1436px;height:21px;background:#efefef"></div><div class="a" style="left:0px;top:209px;width:1436px;height:1px;background:#a9a9a9"></div><div class="t " style="left:-262px;width:300px;text-align:right;top:194.00px;font-size:12.3px;color:#000;">001</div><div class="a" style="left:42px;top:189px;width:272px;height:20px;overflow:hidden"><div class="t" style="left:2px;top:5px;font-size:12.3px;color:#000;transform:scaleX(0.94);transform-origin:0 0">NAKNADA TROŠKOVA PREVOZA U JAVNOM SAO</div></div><div class="t " style="left:71px;width:300px;text-align:right;top:194.00px;font-size:12.3px;color:#000;">000008</div><div class="a" style="left:374px;top:189px;width:177px;height:20px;overflow:hidden"><div class="t" style="left:2px;top:5px;font-size:12.3px;color:#000;transform:scaleX(0.9);transform-origin:0 0">KOSTIĆ ANDRIJA</div></div><div class="t " style="left:329px;width:300px;text-align:right;top:194.00px;font-size:12.3px;color:#000;">3.275,00</div><div class="t " style="left:409px;width:300px;text-align:right;top:194.00px;font-size:12.3px;color:#000;">0,00</div><div class="t " style="left:486px;width:300px;text-align:right;top:194.00px;font-size:12.3px;color:#000;">0,00</div><div class="t " style="left:564px;width:300px;text-align:right;top:194.00px;font-size:12.3px;color:#000;">3.275,00</div><div class="t " style="left:644px;width:300px;text-align:right;top:194.00px;font-size:12.3px;color:#000;">3.638,89</div><div class="t " style="left:703px;width:300px;text-align:right;top:194.00px;font-size:12.3px;color:#000;">10,00</div><div class="t " style="left:778px;width:300px;text-align:right;top:194.00px;font-size:12.3px;color:#000;">363,89</div><div class="t " style="left:1215px;top:194.00px;font-size:12.3px;color:#000;">1 - Novac</div><div class="a" style="left:1286px;top:189px;width:149px;height:20px;overflow:hidden"><div class="t" style="left:2px;top:5px;font-size:12.3px;color:#000;transform:scaleX(0.94);transform-origin:0 0">NAKNADA TROŠKOVA PRE\</div></div><div class="a" style="left:0px;top:210px;width:1436px;height:21px;background:#fff"></div><div class="a" style="left:0px;top:230px;width:1436px;height:1px;background:#a9a9a9"></div><div class="t " style="left:-262px;width:300px;text-align:right;top:215.00px;font-size:12.3px;color:#000;">001</div><div class="a" style="left:42px;top:210px;width:272px;height:20px;overflow:hidden"><div class="t" style="left:2px;top:5px;font-size:12.3px;color:#000;transform:scaleX(0.94);transform-origin:0 0">NAKNADA TROŠKOVA PREVOZA U JAVNOM SAO</div></div><div class="t " style="left:71px;width:300px;text-align:right;top:215.00px;font-size:12.3px;color:#000;">000009</div><div class="a" style="left:374px;top:210px;width:177px;height:20px;overflow:hidden"><div class="t" style="left:2px;top:5px;font-size:12.3px;color:#000;transform:scaleX(0.9);transform-origin:0 0">PRODANOVIĆ DRAGAN</div></div><div class="t " style="left:329px;width:300px;text-align:right;top:215.00px;font-size:12.3px;color:#000;">3.275,00</div><div class="t " style="left:409px;width:300px;text-align:right;top:215.00px;font-size:12.3px;color:#000;">0,00</div><div class="t " style="left:486px;width:300px;text-align:right;top:215.00px;font-size:12.3px;color:#000;">0,00</div><div class="t " style="left:564px;width:300px;text-align:right;top:215.00px;font-size:12.3px;color:#000;">3.275,00</div><div class="t " style="left:644px;width:300px;text-align:right;top:215.00px;font-size:12.3px;color:#000;">3.638,89</div><div class="t " style="left:703px;width:300px;text-align:right;top:215.00px;font-size:12.3px;color:#000;">10,00</div><div class="t " style="left:778px;width:300px;text-align:right;top:215.00px;font-size:12.3px;color:#000;">363,89</div><div class="t " style="left:1215px;top:215.00px;font-size:12.3px;color:#000;">1 - Novac</div><div class="a" style="left:1286px;top:210px;width:149px;height:20px;overflow:hidden"><div class="t" style="left:2px;top:5px;font-size:12.3px;color:#000;transform:scaleX(0.94);transform-origin:0 0">NAKNADA TROŠKOVA PRE\</div></div><div class="a" style="left:0px;top:231px;width:1436px;height:21px;background:#efefef"></div><div class="a" style="left:0px;top:251px;width:1436px;height:1px;background:#a9a9a9"></div><div class="t " style="left:-262px;width:300px;text-align:right;top:236.00px;font-size:12.3px;color:#000;">001</div><div class="a" style="left:42px;top:231px;width:272px;height:20px;overflow:hidden"><div class="t" style="left:2px;top:5px;font-size:12.3px;color:#000;transform:scaleX(0.94);transform-origin:0 0">NAKNADA TROŠKOVA PREVOZA U JAVNOM SAO</div></div><div class="t " style="left:71px;width:300px;text-align:right;top:236.00px;font-size:12.3px;color:#000;">000009</div><div class="a" style="left:374px;top:231px;width:177px;height:20px;overflow:hidden"><div class="t" style="left:2px;top:5px;font-size:12.3px;color:#000;transform:scaleX(0.9);transform-origin:0 0">PRODANOVIĆ DRAGAN</div></div><div class="t " style="left:329px;width:300px;text-align:right;top:236.00px;font-size:12.3px;color:#000;">3.275,00</div><div class="t " style="left:409px;width:300px;text-align:right;top:236.00px;font-size:12.3px;color:#000;">0,00</div><div class="t " style="left:486px;width:300px;text-align:right;top:236.00px;font-size:12.3px;color:#000;">0,00</div><div class="t " style="left:564px;width:300px;text-align:right;top:236.00px;font-size:12.3px;color:#000;">3.275,00</div><div class="t " style="left:644px;width:300px;text-align:right;top:236.00px;font-size:12.3px;color:#000;">3.638,89</div><div class="t " style="left:703px;width:300px;text-align:right;top:236.00px;font-size:12.3px;color:#000;">10,00</div><div class="t " style="left:778px;width:300px;text-align:right;top:236.00px;font-size:12.3px;color:#000;">363,89</div><div class="t " style="left:1215px;top:236.00px;font-size:12.3px;color:#000;">1 - Novac</div><div class="a" style="left:1286px;top:231px;width:149px;height:20px;overflow:hidden"><div class="t" style="left:2px;top:5px;font-size:12.3px;color:#000;transform:scaleX(0.94);transform-origin:0 0">NAKNADA TROŠKOVA PRE\</div></div><div class="a" style="left:0px;top:252px;width:1436px;height:21px;background:#fff"></div><div class="a" style="left:0px;top:272px;width:1436px;height:1px;background:#a9a9a9"></div><div class="t " style="left:-262px;width:300px;text-align:right;top:257.00px;font-size:12.3px;color:#000;">001</div><div class="a" style="left:42px;top:252px;width:272px;height:20px;overflow:hidden"><div class="t" style="left:2px;top:5px;font-size:12.3px;color:#000;transform:scaleX(0.94);transform-origin:0 0">NAKNADA TROŠKOVA PREVOZA U JAVNOM SAO</div></div><div class="t " style="left:71px;width:300px;text-align:right;top:257.00px;font-size:12.3px;color:#000;">000010</div><div class="a" style="left:374px;top:252px;width:177px;height:20px;overflow:hidden"><div class="t" style="left:2px;top:5px;font-size:12.3px;color:#000;transform:scaleX(0.9);transform-origin:0 0">ALEKSIĆ IVAN</div></div><div class="t " style="left:329px;width:300px;text-align:right;top:257.00px;font-size:12.3px;color:#000;">3.275,00</div><div class="t " style="left:409px;width:300px;text-align:right;top:257.00px;font-size:12.3px;color:#000;">0,00</div><div class="t " style="left:486px;width:300px;text-align:right;top:257.00px;font-size:12.3px;color:#000;">0,00</div><div class="t " style="left:564px;width:300px;text-align:right;top:257.00px;font-size:12.3px;color:#000;">3.275,00</div><div class="t " style="left:644px;width:300px;text-align:right;top:257.00px;font-size:12.3px;color:#000;">3.638,89</div><div class="t " style="left:703px;width:300px;text-align:right;top:257.00px;font-size:12.3px;color:#000;">10,00</div><div class="t " style="left:778px;width:300px;text-align:right;top:257.00px;font-size:12.3px;color:#000;">363,89</div><div class="t " style="left:1215px;top:257.00px;font-size:12.3px;color:#000;">1 - Novac</div><div class="a" style="left:1286px;top:252px;width:149px;height:20px;overflow:hidden"><div class="t" style="left:2px;top:5px;font-size:12.3px;color:#000;transform:scaleX(0.94);transform-origin:0 0">NAKNADA TROŠKOVA PRE\</div></div><div class="a" style="left:0px;top:273px;width:1436px;height:21px;background:#efefef"></div><div class="a" style="left:0px;top:293px;width:1436px;height:1px;background:#a9a9a9"></div><div class="t " style="left:-262px;width:300px;text-align:right;top:278.00px;font-size:12.3px;color:#000;">001</div><div class="a" style="left:42px;top:273px;width:272px;height:20px;overflow:hidden"><div class="t" style="left:2px;top:5px;font-size:12.3px;color:#000;transform:scaleX(0.94);transform-origin:0 0">NAKNADA TROŠKOVA PREVOZA U JAVNOM SAO</div></div><div class="t " style="left:71px;width:300px;text-align:right;top:278.00px;font-size:12.3px;color:#000;">000010</div><div class="a" style="left:374px;top:273px;width:177px;height:20px;overflow:hidden"><div class="t" style="left:2px;top:5px;font-size:12.3px;color:#000;transform:scaleX(0.9);transform-origin:0 0">ALEKSIĆ IVAN</div></div><div class="t " style="left:329px;width:300px;text-align:right;top:278.00px;font-size:12.3px;color:#000;">3.275,00</div><div class="t " style="left:409px;width:300px;text-align:right;top:278.00px;font-size:12.3px;color:#000;">0,00</div><div class="t " style="left:486px;width:300px;text-align:right;top:278.00px;font-size:12.3px;color:#000;">0,00</div><div class="t " style="left:564px;width:300px;text-align:right;top:278.00px;font-size:12.3px;color:#000;">3.275,00</div><div class="t " style="left:644px;width:300px;text-align:right;top:278.00px;font-size:12.3px;color:#000;">3.638,89</div><div class="t " style="left:703px;width:300px;text-align:right;top:278.00px;font-size:12.3px;color:#000;">10,00</div><div class="t " style="left:778px;width:300px;text-align:right;top:278.00px;font-size:12.3px;color:#000;">363,89</div><div class="t " style="left:1215px;top:278.00px;font-size:12.3px;color:#000;">1 - Novac</div><div class="a" style="left:1286px;top:273px;width:149px;height:20px;overflow:hidden"><div class="t" style="left:2px;top:5px;font-size:12.3px;color:#000;transform:scaleX(0.94);transform-origin:0 0">NAKNADA TROŠKOVA PRE\</div></div><div class="a" style="left:0px;top:294px;width:1436px;height:21px;background:#fff"></div><div class="a" style="left:0px;top:314px;width:1436px;height:1px;background:#a9a9a9"></div><div class="t " style="left:-262px;width:300px;text-align:right;top:299.00px;font-size:12.3px;color:#000;">001</div><div class="a" style="left:42px;top:294px;width:272px;height:20px;overflow:hidden"><div class="t" style="left:2px;top:5px;font-size:12.3px;color:#000;transform:scaleX(0.94);transform-origin:0 0">NAKNADA TROŠKOVA PREVOZA U JAVNOM SAO</div></div><div class="t " style="left:71px;width:300px;text-align:right;top:299.00px;font-size:12.3px;color:#000;">000011</div><div class="a" style="left:374px;top:294px;width:177px;height:20px;overflow:hidden"><div class="t" style="left:2px;top:5px;font-size:12.3px;color:#000;transform:scaleX(0.9);transform-origin:0 0">STOJKOVIĆ MARIJA</div></div><div class="t " style="left:329px;width:300px;text-align:right;top:299.00px;font-size:12.3px;color:#000;">3.275,00</div><div class="t " style="left:409px;width:300px;text-align:right;top:299.00px;font-size:12.3px;color:#000;">0,00</div><div class="t " style="left:486px;width:300px;text-align:right;top:299.00px;font-size:12.3px;color:#000;">0,00</div><div class="t " style="left:564px;width:300px;text-align:right;top:299.00px;font-size:12.3px;color:#000;">3.275,00</div><div class="t " style="left:644px;width:300px;text-align:right;top:299.00px;font-size:12.3px;color:#000;">3.638,89</div><div class="t " style="left:703px;width:300px;text-align:right;top:299.00px;font-size:12.3px;color:#000;">10,00</div><div class="t " style="left:778px;width:300px;text-align:right;top:299.00px;font-size:12.3px;color:#000;">363,89</div><div class="t " style="left:1215px;top:299.00px;font-size:12.3px;color:#000;">1 - Novac</div><div class="a" style="left:1286px;top:294px;width:149px;height:20px;overflow:hidden"><div class="t" style="left:2px;top:5px;font-size:12.3px;color:#000;transform:scaleX(0.94);transform-origin:0 0">NAKNADA TROŠKOVA PRE\</div></div><div class="a" style="left:0px;top:315px;width:1436px;height:21px;background:#efefef"></div><div class="a" style="left:0px;top:335px;width:1436px;height:1px;background:#a9a9a9"></div><div class="t " style="left:-262px;width:300px;text-align:right;top:320.00px;font-size:12.3px;color:#000;">001</div><div class="a" style="left:42px;top:315px;width:272px;height:20px;overflow:hidden"><div class="t" style="left:2px;top:5px;font-size:12.3px;color:#000;transform:scaleX(0.94);transform-origin:0 0">NAKNADA TROŠKOVA PREVOZA U JAVNOM SAO</div></div><div class="t " style="left:71px;width:300px;text-align:right;top:320.00px;font-size:12.3px;color:#000;">000011</div><div class="a" style="left:374px;top:315px;width:177px;height:20px;overflow:hidden"><div class="t" style="left:2px;top:5px;font-size:12.3px;color:#000;transform:scaleX(0.9);transform-origin:0 0">STOJKOVIĆ MARIJA</div></div><div class="t " style="left:329px;width:300px;text-align:right;top:320.00px;font-size:12.3px;color:#000;">3.275,00</div><div class="t " style="left:409px;width:300px;text-align:right;top:320.00px;font-size:12.3px;color:#000;">0,00</div><div class="t " style="left:486px;width:300px;text-align:right;top:320.00px;font-size:12.3px;color:#000;">0,00</div><div class="t " style="left:564px;width:300px;text-align:right;top:320.00px;font-size:12.3px;color:#000;">3.275,00</div><div class="t " style="left:644px;width:300px;text-align:right;top:320.00px;font-size:12.3px;color:#000;">3.638,89</div><div class="t " style="left:703px;width:300px;text-align:right;top:320.00px;font-size:12.3px;color:#000;">10,00</div><div class="t " style="left:778px;width:300px;text-align:right;top:320.00px;font-size:12.3px;color:#000;">363,89</div><div class="t " style="left:1215px;top:320.00px;font-size:12.3px;color:#000;">1 - Novac</div><div class="a" style="left:1286px;top:315px;width:149px;height:20px;overflow:hidden"><div class="t" style="left:2px;top:5px;font-size:12.3px;color:#000;transform:scaleX(0.94);transform-origin:0 0">NAKNADA TROŠKOVA PRE\</div></div><div class="a" style="left:0px;top:336px;width:1436px;height:21px;background:#fff"></div><div class="a" style="left:0px;top:356px;width:1436px;height:1px;background:#a9a9a9"></div><div class="t " style="left:-262px;width:300px;text-align:right;top:341.00px;font-size:12.3px;color:#000;">001</div><div class="a" style="left:42px;top:336px;width:272px;height:20px;overflow:hidden"><div class="t" style="left:2px;top:5px;font-size:12.3px;color:#000;transform:scaleX(0.94);transform-origin:0 0">NAKNADA TROŠKOVA PREVOZA U JAVNOM SAO</div></div><div class="t " style="left:71px;width:300px;text-align:right;top:341.00px;font-size:12.3px;color:#000;">000012</div><div class="a" style="left:374px;top:336px;width:177px;height:20px;overflow:hidden"><div class="t" style="left:2px;top:5px;font-size:12.3px;color:#000;transform:scaleX(0.9);transform-origin:0 0">PETKOVIĆ &nbsp;IVANA</div></div><div class="t " style="left:329px;width:300px;text-align:right;top:341.00px;font-size:12.3px;color:#000;">3.275,00</div><div class="t " style="left:409px;width:300px;text-align:right;top:341.00px;font-size:12.3px;color:#000;">0,00</div><div class="t " style="left:486px;width:300px;text-align:right;top:341.00px;font-size:12.3px;color:#000;">0,00</div><div class="t " style="left:564px;width:300px;text-align:right;top:341.00px;font-size:12.3px;color:#000;">3.275,00</div><div class="t " style="left:644px;width:300px;text-align:right;top:341.00px;font-size:12.3px;color:#000;">3.638,89</div><div class="t " style="left:703px;width:300px;text-align:right;top:341.00px;font-size:12.3px;color:#000;">10,00</div><div class="t " style="left:778px;width:300px;text-align:right;top:341.00px;font-size:12.3px;color:#000;">363,89</div><div class="t " style="left:1215px;top:341.00px;font-size:12.3px;color:#000;">1 - Novac</div><div class="a" style="left:1286px;top:336px;width:149px;height:20px;overflow:hidden"><div class="t" style="left:2px;top:5px;font-size:12.3px;color:#000;transform:scaleX(0.94);transform-origin:0 0">NAKNADA TROŠKOVA PRE\</div></div><div class="a" style="left:0px;top:357px;width:1436px;height:21px;background:#efefef"></div><div class="a" style="left:0px;top:377px;width:1436px;height:1px;background:#a9a9a9"></div><div class="t " style="left:-262px;width:300px;text-align:right;top:362.00px;font-size:12.3px;color:#000;">001</div><div class="a" style="left:42px;top:357px;width:272px;height:20px;overflow:hidden"><div class="t" style="left:2px;top:5px;font-size:12.3px;color:#000;transform:scaleX(0.94);transform-origin:0 0">NAKNADA TROŠKOVA PREVOZA U JAVNOM SAO</div></div><div class="t " style="left:71px;width:300px;text-align:right;top:362.00px;font-size:12.3px;color:#000;">000012</div><div class="a" style="left:374px;top:357px;width:177px;height:20px;overflow:hidden"><div class="t" style="left:2px;top:5px;font-size:12.3px;color:#000;transform:scaleX(0.9);transform-origin:0 0">PETKOVIĆ &nbsp;IVANA</div></div><div class="t " style="left:329px;width:300px;text-align:right;top:362.00px;font-size:12.3px;color:#000;">3.275,00</div><div class="t " style="left:409px;width:300px;text-align:right;top:362.00px;font-size:12.3px;color:#000;">0,00</div><div class="t " style="left:486px;width:300px;text-align:right;top:362.00px;font-size:12.3px;color:#000;">0,00</div><div class="t " style="left:564px;width:300px;text-align:right;top:362.00px;font-size:12.3px;color:#000;">3.275,00</div><div class="t " style="left:644px;width:300px;text-align:right;top:362.00px;font-size:12.3px;color:#000;">3.638,89</div><div class="t " style="left:703px;width:300px;text-align:right;top:362.00px;font-size:12.3px;color:#000;">10,00</div><div class="t " style="left:778px;width:300px;text-align:right;top:362.00px;font-size:12.3px;color:#000;">363,89</div><div class="t " style="left:1215px;top:362.00px;font-size:12.3px;color:#000;">1 - Novac</div><div class="a" style="left:1286px;top:357px;width:149px;height:20px;overflow:hidden"><div class="t" style="left:2px;top:5px;font-size:12.3px;color:#000;transform:scaleX(0.94);transform-origin:0 0">NAKNADA TROŠKOVA PRE\</div></div><div class="a" style="left:0px;top:378px;width:1436px;height:21px;background:#fff"></div><div class="a" style="left:0px;top:398px;width:1436px;height:1px;background:#a9a9a9"></div><div class="t " style="left:-262px;width:300px;text-align:right;top:383.00px;font-size:12.3px;color:#000;">001</div><div class="a" style="left:42px;top:378px;width:272px;height:20px;overflow:hidden"><div class="t" style="left:2px;top:5px;font-size:12.3px;color:#000;transform:scaleX(0.94);transform-origin:0 0">NAKNADA TROŠKOVA PREVOZA U JAVNOM SAO</div></div><div class="t " style="left:71px;width:300px;text-align:right;top:383.00px;font-size:12.3px;color:#000;">000013</div><div class="a" style="left:374px;top:378px;width:177px;height:20px;overflow:hidden"><div class="t" style="left:2px;top:5px;font-size:12.3px;color:#000;transform:scaleX(0.9);transform-origin:0 0">JAŠOVIĆ ALEKSANDAR</div></div><div class="t " style="left:329px;width:300px;text-align:right;top:383.00px;font-size:12.3px;color:#000;">3.275,00</div><div class="t " style="left:409px;width:300px;text-align:right;top:383.00px;font-size:12.3px;color:#000;">0,00</div><div class="t " style="left:486px;width:300px;text-align:right;top:383.00px;font-size:12.3px;color:#000;">0,00</div><div class="t " style="left:564px;width:300px;text-align:right;top:383.00px;font-size:12.3px;color:#000;">3.275,00</div><div class="t " style="left:644px;width:300px;text-align:right;top:383.00px;font-size:12.3px;color:#000;">3.638,89</div><div class="t " style="left:703px;width:300px;text-align:right;top:383.00px;font-size:12.3px;color:#000;">10,00</div><div class="t " style="left:778px;width:300px;text-align:right;top:383.00px;font-size:12.3px;color:#000;">363,89</div><div class="t " style="left:1215px;top:383.00px;font-size:12.3px;color:#000;">1 - Novac</div><div class="a" style="left:1286px;top:378px;width:149px;height:20px;overflow:hidden"><div class="t" style="left:2px;top:5px;font-size:12.3px;color:#000;transform:scaleX(0.94);transform-origin:0 0">NAKNADA TROŠKOVA PRE\</div></div><div class="a" style="left:0px;top:399px;width:1436px;height:21px;background:#efefef"></div><div class="a" style="left:0px;top:419px;width:1436px;height:1px;background:#a9a9a9"></div><div class="t " style="left:-262px;width:300px;text-align:right;top:404.00px;font-size:12.3px;color:#000;">001</div><div class="a" style="left:42px;top:399px;width:272px;height:20px;overflow:hidden"><div class="t" style="left:2px;top:5px;font-size:12.3px;color:#000;transform:scaleX(0.94);transform-origin:0 0">NAKNADA TROŠKOVA PREVOZA U JAVNOM SAO</div></div><div class="t " style="left:71px;width:300px;text-align:right;top:404.00px;font-size:12.3px;color:#000;">000013</div><div class="a" style="left:374px;top:399px;width:177px;height:20px;overflow:hidden"><div class="t" style="left:2px;top:5px;font-size:12.3px;color:#000;transform:scaleX(0.9);transform-origin:0 0">JAŠOVIĆ ALEKSANDAR</div></div><div class="t " style="left:329px;width:300px;text-align:right;top:404.00px;font-size:12.3px;color:#000;">3.275,00</div><div class="t " style="left:409px;width:300px;text-align:right;top:404.00px;font-size:12.3px;color:#000;">0,00</div><div class="t " style="left:486px;width:300px;text-align:right;top:404.00px;font-size:12.3px;color:#000;">0,00</div><div class="t " style="left:564px;width:300px;text-align:right;top:404.00px;font-size:12.3px;color:#000;">3.275,00</div><div class="t " style="left:644px;width:300px;text-align:right;top:404.00px;font-size:12.3px;color:#000;">3.638,89</div><div class="t " style="left:703px;width:300px;text-align:right;top:404.00px;font-size:12.3px;color:#000;">10,00</div><div class="t " style="left:778px;width:300px;text-align:right;top:404.00px;font-size:12.3px;color:#000;">363,89</div><div class="t " style="left:1215px;top:404.00px;font-size:12.3px;color:#000;">1 - Novac</div><div class="a" style="left:1286px;top:399px;width:149px;height:20px;overflow:hidden"><div class="t" style="left:2px;top:5px;font-size:12.3px;color:#000;transform:scaleX(0.94);transform-origin:0 0">NAKNADA TROŠKOVA PRE\</div></div><div class="a" style="left:0px;top:420px;width:1436px;height:21px;background:#fff"></div><div class="a" style="left:0px;top:440px;width:1436px;height:1px;background:#a9a9a9"></div><div class="t " style="left:-262px;width:300px;text-align:right;top:425.00px;font-size:12.3px;color:#000;">001</div><div class="a" style="left:42px;top:420px;width:272px;height:20px;overflow:hidden"><div class="t" style="left:2px;top:5px;font-size:12.3px;color:#000;transform:scaleX(0.94);transform-origin:0 0">NAKNADA TROŠKOVA PREVOZA U JAVNOM SAO</div></div><div class="t " style="left:71px;width:300px;text-align:right;top:425.00px;font-size:12.3px;color:#000;">000014</div><div class="a" style="left:374px;top:420px;width:177px;height:20px;overflow:hidden"><div class="t" style="left:2px;top:5px;font-size:12.3px;color:#000;transform:scaleX(0.9);transform-origin:0 0">BELOŠEVIĆ BUDIMIR</div></div><div class="t " style="left:329px;width:300px;text-align:right;top:425.00px;font-size:12.3px;color:#000;">3.275,00</div><div class="t " style="left:409px;width:300px;text-align:right;top:425.00px;font-size:12.3px;color:#000;">0,00</div><div class="t " style="left:486px;width:300px;text-align:right;top:425.00px;font-size:12.3px;color:#000;">0,00</div><div class="t " style="left:564px;width:300px;text-align:right;top:425.00px;font-size:12.3px;color:#000;">3.275,00</div><div class="t " style="left:644px;width:300px;text-align:right;top:425.00px;font-size:12.3px;color:#000;">3.638,89</div><div class="t " style="left:703px;width:300px;text-align:right;top:425.00px;font-size:12.3px;color:#000;">10,00</div><div class="t " style="left:778px;width:300px;text-align:right;top:425.00px;font-size:12.3px;color:#000;">363,89</div><div class="t " style="left:1215px;top:425.00px;font-size:12.3px;color:#000;">1 - Novac</div><div class="a" style="left:1286px;top:420px;width:149px;height:20px;overflow:hidden"><div class="t" style="left:2px;top:5px;font-size:12.3px;color:#000;transform:scaleX(0.94);transform-origin:0 0">NAKNADA TROŠKOVA PRE\</div></div><div class="a" style="left:0px;top:441px;width:1436px;height:21px;background:#efefef"></div><div class="a" style="left:0px;top:461px;width:1436px;height:1px;background:#a9a9a9"></div><div class="t " style="left:-262px;width:300px;text-align:right;top:446.00px;font-size:12.3px;color:#000;">001</div><div class="a" style="left:42px;top:441px;width:272px;height:20px;overflow:hidden"><div class="t" style="left:2px;top:5px;font-size:12.3px;color:#000;transform:scaleX(0.94);transform-origin:0 0">NAKNADA TROŠKOVA PREVOZA U JAVNOM SAO</div></div><div class="t " style="left:71px;width:300px;text-align:right;top:446.00px;font-size:12.3px;color:#000;">000014</div><div class="a" style="left:374px;top:441px;width:177px;height:20px;overflow:hidden"><div class="t" style="left:2px;top:5px;font-size:12.3px;color:#000;transform:scaleX(0.9);transform-origin:0 0">BELOŠEVIĆ BUDIMIR</div></div><div class="t " style="left:329px;width:300px;text-align:right;top:446.00px;font-size:12.3px;color:#000;">3.275,00</div><div class="t " style="left:409px;width:300px;text-align:right;top:446.00px;font-size:12.3px;color:#000;">0,00</div><div class="t " style="left:486px;width:300px;text-align:right;top:446.00px;font-size:12.3px;color:#000;">0,00</div><div class="t " style="left:564px;width:300px;text-align:right;top:446.00px;font-size:12.3px;color:#000;">3.275,00</div><div class="t " style="left:644px;width:300px;text-align:right;top:446.00px;font-size:12.3px;color:#000;">3.638,89</div><div class="t " style="left:703px;width:300px;text-align:right;top:446.00px;font-size:12.3px;color:#000;">10,00</div><div class="t " style="left:778px;width:300px;text-align:right;top:446.00px;font-size:12.3px;color:#000;">363,89</div><div class="t " style="left:1215px;top:446.00px;font-size:12.3px;color:#000;">1 - Novac</div><div class="a" style="left:1286px;top:441px;width:149px;height:20px;overflow:hidden"><div class="t" style="left:2px;top:5px;font-size:12.3px;color:#000;transform:scaleX(0.94);transform-origin:0 0">NAKNADA TROŠKOVA PRE\</div></div><div class="a" style="left:0px;top:462px;width:1436px;height:21px;background:#fff"></div><div class="a" style="left:0px;top:482px;width:1436px;height:1px;background:#a9a9a9"></div><div class="t " style="left:-262px;width:300px;text-align:right;top:467.00px;font-size:12.3px;color:#000;">001</div><div class="a" style="left:42px;top:462px;width:272px;height:20px;overflow:hidden"><div class="t" style="left:2px;top:5px;font-size:12.3px;color:#000;transform:scaleX(0.94);transform-origin:0 0">NAKNADA TROŠKOVA PREVOZA U JAVNOM SAO</div></div><div class="t " style="left:71px;width:300px;text-align:right;top:467.00px;font-size:12.3px;color:#000;">000015</div><div class="a" style="left:374px;top:462px;width:177px;height:20px;overflow:hidden"><div class="t" style="left:2px;top:5px;font-size:12.3px;color:#000;transform:scaleX(0.9);transform-origin:0 0">ĐOŠIĆ MILOICA</div></div><div class="t " style="left:329px;width:300px;text-align:right;top:467.00px;font-size:12.3px;color:#000;">3.275,00</div><div class="t " style="left:409px;width:300px;text-align:right;top:467.00px;font-size:12.3px;color:#000;">0,00</div><div class="t " style="left:486px;width:300px;text-align:right;top:467.00px;font-size:12.3px;color:#000;">0,00</div><div class="t " style="left:564px;width:300px;text-align:right;top:467.00px;font-size:12.3px;color:#000;">3.275,00</div><div class="t " style="left:644px;width:300px;text-align:right;top:467.00px;font-size:12.3px;color:#000;">3.638,89</div><div class="t " style="left:703px;width:300px;text-align:right;top:467.00px;font-size:12.3px;color:#000;">10,00</div><div class="t " style="left:778px;width:300px;text-align:right;top:467.00px;font-size:12.3px;color:#000;">363,89</div><div class="t " style="left:1215px;top:467.00px;font-size:12.3px;color:#000;">1 - Novac</div><div class="a" style="left:1286px;top:462px;width:149px;height:20px;overflow:hidden"><div class="t" style="left:2px;top:5px;font-size:12.3px;color:#000;transform:scaleX(0.94);transform-origin:0 0">NAKNADA TROŠKOVA PRE\</div></div><div class="a" style="left:0px;top:483px;width:1436px;height:21px;background:#efefef"></div><div class="a" style="left:0px;top:503px;width:1436px;height:1px;background:#a9a9a9"></div><div class="t " style="left:-262px;width:300px;text-align:right;top:488.00px;font-size:12.3px;color:#000;">001</div><div class="a" style="left:42px;top:483px;width:272px;height:20px;overflow:hidden"><div class="t" style="left:2px;top:5px;font-size:12.3px;color:#000;transform:scaleX(0.94);transform-origin:0 0">NAKNADA TROŠKOVA PREVOZA U JAVNOM SAO</div></div><div class="t " style="left:71px;width:300px;text-align:right;top:488.00px;font-size:12.3px;color:#000;">000015</div><div class="a" style="left:374px;top:483px;width:177px;height:20px;overflow:hidden"><div class="t" style="left:2px;top:5px;font-size:12.3px;color:#000;transform:scaleX(0.9);transform-origin:0 0">ĐOŠIĆ MILOICA</div></div><div class="t " style="left:329px;width:300px;text-align:right;top:488.00px;font-size:12.3px;color:#000;">3.275,00</div><div class="t " style="left:409px;width:300px;text-align:right;top:488.00px;font-size:12.3px;color:#000;">0,00</div><div class="t " style="left:486px;width:300px;text-align:right;top:488.00px;font-size:12.3px;color:#000;">0,00</div><div class="t " style="left:564px;width:300px;text-align:right;top:488.00px;font-size:12.3px;color:#000;">3.275,00</div><div class="t " style="left:644px;width:300px;text-align:right;top:488.00px;font-size:12.3px;color:#000;">3.638,89</div><div class="t " style="left:703px;width:300px;text-align:right;top:488.00px;font-size:12.3px;color:#000;">10,00</div><div class="t " style="left:778px;width:300px;text-align:right;top:488.00px;font-size:12.3px;color:#000;">363,89</div><div class="t " style="left:1215px;top:488.00px;font-size:12.3px;color:#000;">1 - Novac</div><div class="a" style="left:1286px;top:483px;width:149px;height:20px;overflow:hidden"><div class="t" style="left:2px;top:5px;font-size:12.3px;color:#000;transform:scaleX(0.94);transform-origin:0 0">NAKNADA TROŠKOVA PRE\</div></div><div class="a" style="left:41px;top:0px;width:1px;height:500px;background:#a9a9a9"></div><div class="a" style="left:315px;top:0px;width:1px;height:500px;background:#a9a9a9"></div><div class="a" style="left:373px;top:0px;width:1px;height:500px;background:#a9a9a9"></div><div class="a" style="left:552px;top:0px;width:1px;height:500px;background:#a9a9a9"></div><div class="a" style="left:632px;top:0px;width:1px;height:500px;background:#a9a9a9"></div><div class="a" style="left:711px;top:0px;width:1px;height:500px;background:#a9a9a9"></div><div class="a" style="left:788px;top:0px;width:1px;height:500px;background:#a9a9a9"></div><div class="a" style="left:866px;top:0px;width:1px;height:500px;background:#a9a9a9"></div><div class="a" style="left:946px;top:0px;width:1px;height:500px;background:#a9a9a9"></div><div class="a" style="left:1005px;top:0px;width:1px;height:500px;background:#a9a9a9"></div><div class="a" style="left:1080px;top:0px;width:1px;height:500px;background:#a9a9a9"></div><div class="a" style="left:1146px;top:0px;width:1px;height:500px;background:#a9a9a9"></div><div class="a" style="left:1212px;top:0px;width:1px;height:500px;background:#a9a9a9"></div><div class="a" style="left:1285px;top:0px;width:1px;height:500px;background:#a9a9a9"></div></div>
<div class="a" style="left:233px;top:925px;width:1436px;height:1px;background:#7ea2dc"></div>
<div class="a" style="left:233px;top:926px;width:1436px;height:26px;background:#dcdcdc"></div>
<div class="a" style="left:787px;top:928px;width:77px;height:20px;background:#f0f0f0;border:1px solid #7c9fd6;overflow:hidden"><div class="t " style="left:2px;top:5.00px;font-size:12.3px;color:#000;">1.447.550,00</div></div>
<div class="a" style="left:867px;top:928px;width:76px;height:20px;background:#f0f0f0;border:1px solid #7c9fd6;overflow:hidden"><div class="t " style="left:-228px;width:300px;text-align:right;top:5.00px;font-size:12.3px;color:#000;">0,00</div></div>
<div class="a" style="left:946px;top:928px;width:74px;height:20px;background:#f0f0f0;border:1px solid #7c9fd6;overflow:hidden"><div class="t " style="left:-230px;width:300px;text-align:right;top:5.00px;font-size:12.3px;color:#000;">0,00</div></div>
<div class="a" style="left:1023px;top:928px;width:74px;height:20px;background:#f0f0f0;border:1px solid #7c9fd6;overflow:hidden"><div class="t " style="left:2px;top:5.00px;font-size:12.3px;color:#000;">1.447.550,00</div></div>
<div class="a" style="left:1100px;top:928px;width:78px;height:20px;background:#f0f0f0;border:1px solid #7c9fd6;overflow:hidden"><div class="t " style="left:2px;top:5.00px;font-size:12.3px;color:#000;">1.608.389,38</div></div>
<div class="a" style="left:1240px;top:928px;width:72px;height:20px;background:#f0f0f0;border:1px solid #7c9fd6;overflow:hidden"><div class="t " style="left:2px;top:5.00px;font-size:12.3px;color:#000;">160.839,38</div></div>
<div class="a" style="left:1669px;top:408px;width:19px;height:544px;background:#f0f0f0"></div>
<div class="a" style="left:1670px;top:428px;width:17px;height:24px;background:#c9c9c9"></div>
<svg class="a" style="left:1673px;top:414px;" width="11" height="7" viewBox="0 0 11 7"><path d="M2 6l3.5-3.5L9 6" fill="none" stroke="#505050" stroke-width="2.2"/></svg>
<svg class="a" style="left:1673px;top:937px;" width="11" height="7" viewBox="0 0 11 7"><path d="M2 1.5l3.5 3.5L9 1.5" fill="none" stroke="#505050" stroke-width="2.2"/></svg>
<div class="a" style="left:233px;top:952px;width:1455px;height:21px;background:#f0f0f0"></div>
<div class="a" style="left:656px;top:953px;width:791px;height:18px;background:#c9c9c9"></div>
<svg class="a" style="left:642px;top:957px;" width="7" height="11" viewBox="0 0 7 11"><path d="M5.5 2L2 5.5 5.5 9" fill="none" stroke="#444" stroke-width="2.2"/></svg>
<svg class="a" style="left:1655px;top:957px;" width="7" height="11" viewBox="0 0 7 11"><path d="M1.5 2l3.5 3.5L1.5 9" fill="none" stroke="#444" stroke-width="2.2"/></svg>
<div class="a" style="left:234px;top:953px;width:17px;height:19px;background:#e8e8e8"></div>
<div class="a" style="left:253px;top:953px;width:17px;height:19px;background:#e8e8e8"></div>
<div class="a" style="left:272px;top:953px;width:17px;height:19px;background:#e8e8e8"></div>
<div class="a" style="left:355px;top:953px;width:17px;height:19px;background:#d9d9d9"></div>
<div class="a" style="left:374px;top:953px;width:17px;height:19px;background:#d9d9d9"></div>
<div class="a" style="left:393px;top:953px;width:17px;height:19px;background:#d9d9d9"></div>
<div class="a" style="left:412px;top:953px;width:17px;height:19px;background:#e8e8e8"></div>
<div class="a" style="left:431px;top:953px;width:17px;height:19px;background:#e8e8e8"></div>
<div class="a" style="left:450px;top:953px;width:17px;height:19px;background:#e8e8e8"></div>
<div class="a" style="left:469px;top:953px;width:17px;height:19px;background:#e8e8e8"></div>
<div class="a" style="left:488px;top:953px;width:17px;height:19px;background:#e8e8e8"></div>
<div class="a" style="left:507px;top:953px;width:17px;height:19px;background:#d6d6d6"></div>
<div class="a" style="left:526px;top:953px;width:17px;height:19px;background:#d6d6d6"></div>
<div class="a" style="left:545px;top:953px;width:17px;height:19px;background:#e8e8e8"></div>
<div class="a" style="left:564px;top:953px;width:17px;height:19px;background:#d6d6d6"></div>
<div class="a" style="left:290px;top:953px;width:64px;height:19px;background:#fff"></div>
<div class="t " style="left:297px;top:958.00px;font-size:12.6px;color:#000;">1 od 442</div>
<svg class="a" style="left:233px;top:953px;" width="18" height="19" viewBox="0 0 18 19"><path d="M4 6v9" stroke="#a8a8a8" stroke-width="1.6"/><path d="M10 6.5v8L5.5 10.5zM14.5 6.5v8L10 10.5z" fill="#a8a8a8"/></svg>
<svg class="a" style="left:252px;top:953px;" width="18" height="19" viewBox="0 0 18 19"><path d="M9 6.5v8L4.5 10.5zM13.5 6.5v8L9 10.5z" fill="#a8a8a8"/></svg>
<svg class="a" style="left:271px;top:953px;" width="18" height="19" viewBox="0 0 18 19"><path d="M11 7v7L7 10.5z" fill="#a8a8a8"/></svg>
<svg class="a" style="left:355px;top:953px;" width="18" height="19" viewBox="0 0 18 19"><path d="M7 7v7l4-3.5z" fill="#111"/></svg>
<svg class="a" style="left:374px;top:953px;" width="18" height="19" viewBox="0 0 18 19"><path d="M4.5 6.5v8L9 10.5zM9 6.5v8l4.5-4z" fill="#111"/></svg>
<svg class="a" style="left:393px;top:953px;" width="18" height="19" viewBox="0 0 18 19"><path d="M3.5 6.5v8L8 10.5zM8 6.5v8l4.5-4z" fill="#111"/><path d="M14 6v9" stroke="#111" stroke-width="1.6"/></svg>
<svg class="a" style="left:412px;top:953px;" width="18" height="19" viewBox="0 0 18 19"><path d="M9 4v13M2.5 10.5h13" stroke="#c4c4c4" stroke-width="2"/></svg>
<svg class="a" style="left:431px;top:953px;" width="18" height="19" viewBox="0 0 18 19"><path d="M2.5 10.5h13" stroke="#c4c4c4" stroke-width="2"/></svg>
<svg class="a" style="left:450px;top:953px;" width="18" height="19" viewBox="0 0 18 19"><path d="M5 12.5l4-4.5 4 4.5z" fill="#c4c4c4"/></svg>
<svg class="a" style="left:469px;top:953px;" width="18" height="19" viewBox="0 0 18 19"><path d="M3 10.5l4 4 8-8" fill="none" stroke="#c4c4c4" stroke-width="1.8"/></svg>
<svg class="a" style="left:488px;top:953px;" width="18" height="19" viewBox="0 0 18 19"><path d="M5 6.5l8 8M13 6.5l-8 8" stroke="#c4c4c4" stroke-width="1.6"/></svg>
<svg class="a" style="left:507px;top:953px;" width="18" height="19" viewBox="0 0 18 19"><path d="M3 15c0-5 3-7 9-7" fill="none" stroke="#222" stroke-width="2.6"/><path d="M11 3.5l5 4.5-5 4.5z" fill="#222"/></svg>
<svg class="a" style="left:526px;top:953px;" width="18" height="19" viewBox="0 0 18 19"><g stroke="#111" stroke-width="2"><line x1="9" y1="5" x2="9" y2="16" transform="rotate(0 9 10.5)"/><line x1="9" y1="5" x2="9" y2="16" transform="rotate(45 9 10.5)"/><line x1="9" y1="5" x2="9" y2="16" transform="rotate(90 9 10.5)"/><line x1="9" y1="5" x2="9" y2="16" transform="rotate(135 9 10.5)"/></g></svg>
<svg class="a" style="left:545px;top:953px;" width="18" height="19" viewBox="0 0 18 19"><g stroke="#666" stroke-width="1.6"><line x1="9" y1="5.5" x2="9" y2="15.5" transform="rotate(0 9 10.5)"/><line x1="9" y1="5.5" x2="9" y2="15.5" transform="rotate(45 9 10.5)"/><line x1="9" y1="5.5" x2="9" y2="15.5" transform="rotate(90 9 10.5)"/><line x1="9" y1="5.5" x2="9" y2="15.5" transform="rotate(135 9 10.5)"/></g><path d="M3 3l1.5 3" stroke="#555"/></svg>
<svg class="a" style="left:564px;top:953px;" width="18" height="19" viewBox="0 0 18 19"><path d="M2 4h14l-5 6v6l-4-2v-4z" fill="#f07f0c"/></svg>
<div class="a" style="left:231px;top:974px;width:1458px;height:34px;background:#f0f0f0"></div>
<div class="a" style="left:235px;top:976px;width:87px;height:29px;background:#e1e1e1;border:1px solid #adadad;outline:1px solid #d6d6d6"></div>
<div class="t " style="left:234.5px;width:87px;text-align:center;top:985.00px;font-size:13.5px;color:#000;">F5 - Novi</div>
<div class="a" style="left:325px;top:976px;width:101px;height:29px;background:linear-gradient(#f8f8f8,#ececec);border:1px solid #dcdcdc"></div>
<div class="a" style="left:329px;top:983px;width:12px;height:12px;border:1px solid #222;background:#fff"></div>
<svg class="a" style="left:330px;top:984px;" width="10" height="10" viewBox="0 0 10 10"><path d="M1.5 5l2.5 3L8.5 1.5" fill="none" stroke="#111" stroke-width="1.8"/></svg>
<div class="t " style="left:348px;top:985.00px;font-size:12.8px;color:#000;">Svi statusi</div>
<div class="a" style="left:429px;top:976px;width:111px;height:29px;background:linear-gradient(#f8f8f8,#ececec);border:1px solid #dcdcdc"></div>
<div class="a" style="left:432px;top:983px;width:12px;height:12px;border:1px solid #bdbdbd;background:#f4f4f4"></div>
<div class="t " style="left:451px;top:985.00px;font-size:12.8px;color:#a5a5a5;">F2 - IZMENE</div>
<div class="a" style="left:542px;top:976px;width:518px;height:29px;background:linear-gradient(#f9f9f9,#ececec);border:1px solid #dcdcdc"></div>
<div class="a" style="left:1062px;top:976px;width:110px;height:29px;background:#d0d0d0;border:1px solid #bfbfbf;outline:1px solid #e2e2e2"></div>
<div class="t " style="left:1062.0px;width:110px;text-align:center;top:985.00px;font-size:13.5px;color:#8a8a8a;">Formiraj za sve</div>
<div class="a" style="left:1176px;top:976px;width:122px;height:29px;background:#d0d0d0;border:1px solid #bfbfbf;outline:1px solid #e2e2e2"></div>
<div class="t " style="left:1176.0px;width:122px;text-align:center;top:985.00px;font-size:13.5px;color:#8a8a8a;">Potvrdi stavku</div>
<div class="a" style="left:1301px;top:976px;width:111px;height:29px;background:#d0d0d0;border:1px solid #bfbfbf;outline:1px solid #e2e2e2"></div>
<div class="t " style="left:1301.0px;width:111px;text-align:center;top:985.00px;font-size:13.5px;color:#8a8a8a;">Potvrdi SVE</div>
<div class="a" style="left:1414px;top:976px;width:90px;height:29px;background:#d0d0d0;border:1px solid #bfbfbf;outline:1px solid #e2e2e2"></div>
<div class="t " style="left:1414.0px;width:90px;text-align:center;top:985.00px;font-size:13.5px;color:#8a8a8a;">Vrati SVE</div>
<div class="a" style="left:1506px;top:976px;width:90px;height:29px;background:#d0d0d0;border:1px solid #bfbfbf;outline:1px solid #e2e2e2"></div>
<div class="t " style="left:1506.0px;width:90px;text-align:center;top:985.00px;font-size:13.5px;color:#8a8a8a;">Vrati stavku</div>
<div class="a" style="left:1598px;top:976px;width:89px;height:29px;background:#d0d0d0;border:1px solid #bfbfbf;outline:1px solid #e2e2e2"></div>
<div class="t " style="left:1598.0px;width:89px;text-align:center;top:985.00px;font-size:13.5px;color:#8a8a8a;">Obriši sve</div>
<div class="a" style="left:1689px;top:98px;width:230px;height:29px;background:#f0f0f0"></div>
<svg class="a" style="left:1690px;top:98px;" width="47" height="29" viewBox="0 0 47 29"><path d="M0.5 29 V5.5 L5.5 0.5 H46.5 V29" fill="#f0f0f0" stroke="#c4c4c4"/><path d="M4 0 H47 V3 H1z" fill="#2b579a"/></svg><div class="t " style="left:1694px;top:109.00px;font-size:12.8px;color:#000;">Planer</div>
<svg class="a" style="left:1738px;top:99px;" width="71" height="28" viewBox="0 0 71 28"><defs><linearGradient id="tg11" x1="0" y1="0" x2="0" y2="1"><stop offset="0" stop-color="#fefefe"/><stop offset="1" stop-color="#e2e2e2"/></linearGradient></defs><path d="M0.5 28 V5.5 L5.5 0.5 H70.5 V28" fill="url(#tg11)" stroke="#b9b9b9"/></svg><div class="t " style="left:1744px;top:109.00px;font-size:12.8px;color:#000;">Za štampu</div>
<svg class="a" style="left:1810px;top:99px;" width="56" height="28" viewBox="0 0 56 28"><defs><linearGradient id="tg12" x1="0" y1="0" x2="0" y2="1"><stop offset="0" stop-color="#fefefe"/><stop offset="1" stop-color="#e2e2e2"/></linearGradient></defs><path d="M0.5 28 V5.5 L5.5 0.5 H55.5 V28" fill="url(#tg12)" stroke="#b9b9b9"/></svg><div class="t " style="left:1817px;top:109.00px;font-size:12.8px;color:#000;">Tajmeri</div>
<div class="a" style="left:1690px;top:126px;width:229px;height:1px;background:#b0b0b0"></div>
<div class="a" style="left:1690px;top:127px;width:45px;height:881px;background:#f0f0f0"></div>
<div class="a" style="left:1734px;top:127px;width:1px;height:881px;background:#b4b4b4"></div>
<div class="a" style="left:1689px;top:127px;width:2px;height:881px;background:#a6a6a6"></div>
<div class="a" style="left:1689px;top:98px;width:1px;height:29px;background:#c8c8c8"></div>
<div class="a" style="left:1735px;top:127px;width:164px;height:37px;background:#f9f9f9"></div>
<div class="t " style="left:1717.0px;width:200px;text-align:center;top:141.00px;font-size:12.8px;color:#000;">Thursday, August 8</div>
<div class="a" style="left:1735px;top:164px;width:164px;height:3px;background:#cdcdcd"></div>
<div class="a" style="left:1691px;top:165px;width:43px;height:1px;background:#b4b4b4"></div>
<div class="a" style="left:1735px;top:167px;width:164px;height:841px;background:#fff"></div>
<div class="a" style="left:1742px;top:167px;width:1px;height:841px;background:#111"></div>
<div class="t " style="left:1655px;width:60px;text-align:right;top:171.00px;font-size:16.5px;color:#000;">4</div>
<div class="t " style="left:1718px;top:176.00px;font-size:8.5px;color:#000;">00</div>
<div class="a" style="left:1717px;top:190px;width:11px;height:1px;background:#999"></div>
<div class="a" style="left:1697px;top:214px;width:31px;height:1px;background:#999"></div>
<div class="t " style="left:1655px;width:60px;text-align:right;top:219.00px;font-size:16.5px;color:#000;">5</div>
<div class="t " style="left:1718px;top:224.00px;font-size:8.5px;color:#000;">00</div>
<div class="a" style="left:1717px;top:238px;width:11px;height:1px;background:#999"></div>
<div class="a" style="left:1697px;top:262px;width:31px;height:1px;background:#999"></div>
<div class="t " style="left:1655px;width:60px;text-align:right;top:267.00px;font-size:16.5px;color:#000;">6</div>
<div class="t " style="left:1718px;top:272.00px;font-size:8.5px;color:#000;">00</div>
<div class="a" style="left:1717px;top:286px;width:11px;height:1px;background:#999"></div>
<div class="a" style="left:1697px;top:310px;width:31px;height:1px;background:#999"></div>
<div class="t " style="left:1655px;width:60px;text-align:right;top:315.00px;font-size:16.5px;color:#000;">7</div>
<div class="t " style="left:1718px;top:320.00px;font-size:8.5px;color:#000;">00</div>
<div class="a" style="left:1717px;top:334px;width:11px;height:1px;background:#999"></div>
<div class="a" style="left:1697px;top:358px;width:31px;height:1px;background:#999"></div>
<div class="t " style="left:1655px;width:60px;text-align:right;top:363.00px;font-size:16.5px;color:#000;">8</div>
<div class="t " style="left:1718px;top:368.00px;font-size:8.5px;color:#000;">00</div>
<div class="a" style="left:1717px;top:382px;width:11px;height:1px;background:#999"></div>
<div class="a" style="left:1697px;top:406px;width:31px;height:1px;background:#999"></div>
<div class="t " style="left:1655px;width:60px;text-align:right;top:411.00px;font-size:16.5px;color:#000;">9</div>
<div class="t " style="left:1718px;top:416.00px;font-size:8.5px;color:#000;">00</div>
<div class="a" style="left:1717px;top:430px;width:11px;height:1px;background:#999"></div>
<div class="a" style="left:1697px;top:454px;width:31px;height:1px;background:#999"></div>
<div class="t " style="left:1655px;width:60px;text-align:right;top:459.00px;font-size:16.5px;color:#000;">10</div>
<div class="t " style="left:1718px;top:464.00px;font-size:8.5px;color:#000;">00</div>
<div class="a" style="left:1717px;top:478px;width:11px;height:1px;background:#999"></div>
<div class="a" style="left:1697px;top:502px;width:31px;height:1px;background:#999"></div>
<div class="t " style="left:1655px;width:60px;text-align:right;top:507.00px;font-size:16.5px;color:#000;">11</div>
<div class="t " style="left:1718px;top:512.00px;font-size:8.5px;color:#000;">00</div>
<div class="a" style="left:1717px;top:526px;width:11px;height:1px;background:#999"></div>
<div class="a" style="left:1697px;top:550px;width:31px;height:1px;background:#999"></div>
<div class="t " style="left:1655px;width:60px;text-align:right;top:555.00px;font-size:16.5px;color:#000;">12</div>
<div class="t " style="left:1718px;top:560.00px;font-size:8.5px;color:#000;">pm</div>
<div class="a" style="left:1717px;top:574px;width:11px;height:1px;background:#999"></div>
<div class="a" style="left:1697px;top:598px;width:31px;height:1px;background:#999"></div>
<div class="t " style="left:1655px;width:60px;text-align:right;top:603.00px;font-size:16.5px;color:#000;">1</div>
<div class="t " style="left:1718px;top:608.00px;font-size:8.5px;color:#000;">00</div>
<div class="a" style="left:1717px;top:622px;width:11px;height:1px;background:#999"></div>
<div class="a" style="left:1697px;top:646px;width:31px;height:1px;background:#999"></div>
<div class="t " style="left:1655px;width:60px;text-align:right;top:651.00px;font-size:16.5px;color:#000;">2</div>
<div class="t " style="left:1718px;top:656.00px;font-size:8.5px;color:#000;">00</div>
<div class="a" style="left:1717px;top:670px;width:11px;height:1px;background:#999"></div>
<div class="a" style="left:1697px;top:694px;width:31px;height:1px;background:#999"></div>
<div class="t " style="left:1655px;width:60px;text-align:right;top:699.00px;font-size:16.5px;color:#000;">3</div>
<div class="t " style="left:1718px;top:704.00px;font-size:8.5px;color:#000;">00</div>
<div class="a" style="left:1717px;top:718px;width:11px;height:1px;background:#999"></div>
<div class="a" style="left:1697px;top:742px;width:31px;height:1px;background:#999"></div>
<div class="t " style="left:1655px;width:60px;text-align:right;top:747.00px;font-size:16.5px;color:#000;">4</div>
<div class="t " style="left:1718px;top:752.00px;font-size:8.5px;color:#000;">00</div>
<div class="a" style="left:1717px;top:766px;width:11px;height:1px;background:#999"></div>
<div class="a" style="left:1697px;top:790px;width:31px;height:1px;background:#999"></div>
<div class="t " style="left:1655px;width:60px;text-align:right;top:795.00px;font-size:16.5px;color:#000;">5</div>
<div class="t " style="left:1718px;top:800.00px;font-size:8.5px;color:#000;">00</div>
<div class="a" style="left:1717px;top:814px;width:11px;height:1px;background:#999"></div>
<div class="a" style="left:1697px;top:838px;width:31px;height:1px;background:#999"></div>
<div class="t " style="left:1655px;width:60px;text-align:right;top:843.00px;font-size:16.5px;color:#000;">6</div>
<div class="t " style="left:1718px;top:848.00px;font-size:8.5px;color:#000;">00</div>
<div class="a" style="left:1717px;top:862px;width:11px;height:1px;background:#999"></div>
<div class="a" style="left:1697px;top:886px;width:31px;height:1px;background:#999"></div>
<div class="t " style="left:1655px;width:60px;text-align:right;top:891.00px;font-size:16.5px;color:#000;">7</div>
<div class="t " style="left:1718px;top:896.00px;font-size:8.5px;color:#000;">00</div>
<div class="a" style="left:1717px;top:910px;width:11px;height:1px;background:#999"></div>
<div class="a" style="left:1697px;top:934px;width:31px;height:1px;background:#999"></div>
<div class="t " style="left:1655px;width:60px;text-align:right;top:939.00px;font-size:16.5px;color:#000;">8</div>
<div class="t " style="left:1718px;top:944.00px;font-size:8.5px;color:#000;">00</div>
<div class="a" style="left:1717px;top:958px;width:11px;height:1px;background:#999"></div>
<div class="a" style="left:1697px;top:982px;width:31px;height:1px;background:#999"></div>
<div class="t " style="left:1655px;width:60px;text-align:right;top:987.00px;font-size:16.5px;color:#000;">9</div>
<div class="t " style="left:1718px;top:992.00px;font-size:8.5px;color:#000;">00</div>
<div class="a" style="left:1717px;top:1006px;width:11px;height:1px;background:#999"></div>
<div class="a" style="left:1697px;top:1030px;width:31px;height:1px;background:#999"></div>
<div class="a" style="left:1743px;top:190px;width:156px;height:1px;background:#a8a8a8"></div>
<div class="a" style="left:1743px;top:214px;width:156px;height:1px;background:#a8a8a8"></div>
<div class="a" style="left:1743px;top:238px;width:156px;height:1px;background:#a8a8a8"></div>
<div class="a" style="left:1743px;top:262px;width:156px;height:1px;background:#a8a8a8"></div>
<div class="a" style="left:1743px;top:286px;width:156px;height:1px;background:#a8a8a8"></div>
<div class="a" style="left:1743px;top:310px;width:156px;height:1px;background:#a8a8a8"></div>
<div class="a" style="left:1743px;top:334px;width:156px;height:1px;background:#a8a8a8"></div>
<div class="a" style="left:1743px;top:358px;width:156px;height:1px;background:#a8a8a8"></div>
<div class="a" style="left:1743px;top:382px;width:156px;height:1px;background:#a8a8a8"></div>
<div class="a" style="left:1743px;top:406px;width:156px;height:1px;background:#a8a8a8"></div>
<div class="a" style="left:1743px;top:430px;width:156px;height:1px;background:#a8a8a8"></div>
<div class="a" style="left:1743px;top:454px;width:156px;height:1px;background:#a8a8a8"></div>
<div class="a" style="left:1743px;top:478px;width:156px;height:1px;background:#a8a8a8"></div>
<div class="a" style="left:1743px;top:502px;width:156px;height:1px;background:#a8a8a8"></div>
<div class="a" style="left:1743px;top:526px;width:156px;height:1px;background:#a8a8a8"></div>
<div class="a" style="left:1743px;top:550px;width:156px;height:1px;background:#a8a8a8"></div>
<div class="a" style="left:1743px;top:574px;width:156px;height:1px;background:#a8a8a8"></div>
<div class="a" style="left:1743px;top:598px;width:156px;height:1px;background:#a8a8a8"></div>
<div class="a" style="left:1743px;top:622px;width:156px;height:1px;background:#a8a8a8"></div>
<div class="a" style="left:1743px;top:646px;width:156px;height:1px;background:#a8a8a8"></div>
<div class="a" style="left:1743px;top:670px;width:156px;height:1px;background:#a8a8a8"></div>
<div class="a" style="left:1743px;top:694px;width:156px;height:1px;background:#a8a8a8"></div>
<div class="a" style="left:1743px;top:718px;width:156px;height:1px;background:#a8a8a8"></div>
<div class="a" style="left:1743px;top:742px;width:156px;height:1px;background:#a8a8a8"></div>
<div class="a" style="left:1743px;top:766px;width:156px;height:1px;background:#a8a8a8"></div>
<div class="a" style="left:1743px;top:790px;width:156px;height:1px;background:#a8a8a8"></div>
<div class="a" style="left:1743px;top:814px;width:156px;height:1px;background:#a8a8a8"></div>
<div class="a" style="left:1743px;top:838px;width:156px;height:1px;background:#a8a8a8"></div>
<div class="a" style="left:1743px;top:862px;width:156px;height:1px;background:#a8a8a8"></div>
<div class="a" style="left:1743px;top:886px;width:156px;height:1px;background:#a8a8a8"></div>
<div class="a" style="left:1743px;top:910px;width:156px;height:1px;background:#a8a8a8"></div>
<div class="a" style="left:1743px;top:934px;width:156px;height:1px;background:#a8a8a8"></div>
<div class="a" style="left:1743px;top:958px;width:156px;height:1px;background:#a8a8a8"></div>
<div class="a" style="left:1743px;top:982px;width:156px;height:1px;background:#a8a8a8"></div>
<div class="a" style="left:1743px;top:1006px;width:156px;height:1px;background:#a8a8a8"></div>
<div class="a" style="left:1691px;top:521px;width:43px;height:3px;background:#d0d0d0"></div>
<div class="a" style="left:1899px;top:127px;width:19px;height:881px;background:#f0f0f0"></div>
<div class="a" style="left:1900px;top:286px;width:17px;height:614px;background:#c9c9c9"></div>
<svg class="a" style="left:1903px;top:133px;" width="11" height="7" viewBox="0 0 11 7"><path d="M2 6l3.5-3.5L9 6" fill="none" stroke="#505050" stroke-width="2.2"/></svg>
<svg class="a" style="left:1903px;top:994px;" width="11" height="7" viewBox="0 0 11 7"><path d="M2 1.5l3.5 3.5L9 1.5" fill="none" stroke="#505050" stroke-width="2.2"/></svg>
<div class="a" style="left:1918px;top:127px;width:1px;height:881px;background:#a0a0a0"></div>
<div class="a" style="left:0px;top:1008px;width:1919px;height:29px;background:#2b579a"></div>
<div class="a" style="left:1671px;top:1011px;width:71px;height:25px;border:1px solid #e6ecf5"></div>
<div class="t " style="left:1671.0px;width:70px;text-align:center;top:1018.00px;font-size:12.8px;color:#fff;">T R X</div>
<div class="a" style="left:1745px;top:1010px;width:1px;height:26px;background:#3f68a8"></div>
<div class="a" style="left:1774px;top:1010px;width:1px;height:26px;background:#3f68a8"></div>
<div class="a" style="left:1813px;top:1010px;width:1px;height:26px;background:#3f68a8"></div>
<div class="a" style="left:1847px;top:1010px;width:1px;height:26px;background:#3f68a8"></div>
<div class="a" style="left:1885px;top:1010px;width:1px;height:26px;background:#3f68a8"></div>
<div class="t " style="left:1779px;top:1018.00px;font-size:12.3px;color:#9daccb;">CAPS</div>
<div class="t " style="left:1818px;top:1018.00px;font-size:12.3px;color:#9daccb;">NUM</div>
<div class="t " style="left:1852px;top:1018.00px;font-size:12.3px;color:#9daccb;">SCRL</div>
<div class="t " style="left:1892px;top:1018.00px;font-size:12.3px;color:#9daccb;">INS</div>
<div class="a" style="left:618px;top:434px;width:223px;height:95px;box-shadow:0 0 5px 1px rgba(0,0,0,0.35)"></div>
<div class="a" style="left:618px;top:434px;width:223px;height:95px;background:#f0f0f0;border:1px solid #c8c8c8"></div>
<div class="a" style="left:618px;top:434px;width:223px;height:30px;background:#2b579a"></div>
<div class="t " style="left:654.0px;width:150px;text-align:center;top:444.00px;font-size:12.8px;color:#fff;">Datum valute</div>
<svg class="a" style="left:819px;top:443px;" width="13" height="13" viewBox="0 0 13 13"><path d="M1 1l11 11M12 1L1 12" stroke="#fff" stroke-width="1.2"/></svg>
<div class="a" style="left:620px;top:465px;width:100px;height:29px;background:linear-gradient(#f6f6f6,#e8e8e8);border:1px solid #dedede"></div>
<div class="a" style="left:621px;top:466px;width:99px;height:27px;background:#fff;border:1px solid #a9a9a9"></div>
<div class="a" style="left:701px;top:468px;width:17px;height:23px;background:#dcdcdc"></div>
<svg class="a" style="left:704px;top:476px;" width="12" height="7" viewBox="0 0 12 7"><path d="M0 0h12L6 6z" fill="#111"/></svg>
<div class="t " style="left:623px;top:473.00px;font-size:12.3px;color:#000;">31.07.24</div>
<div class="a" style="left:724px;top:466px;width:116px;height:29px;background:linear-gradient(#f8f8f8,#e8e8e8);border:1px solid #dedede"></div>
<div class="t " style="left:731.0px;width:100px;text-align:center;top:473.00px;font-size:12.8px;color:#000;">Utorak</div>
<div class="a" style="left:620px;top:498px;width:106px;height:30px;background:linear-gradient(#f6f6f6,#ececec)"></div>
<div class="a" style="left:621px;top:499px;width:103px;height:27px;background:#e1e1e1;border:2px solid #1a73d8"></div>
<div class="a" style="left:623px;top:501px;width:99px;height:23px;border:1px dotted #111"></div>
<div class="t " style="left:622.0px;width:100px;text-align:center;top:507.00px;font-size:12.8px;color:#000;">OK / Zatvori</div>
<div class="a" style="left:728px;top:498px;width:112px;height:30px;background:linear-gradient(#f6f6f6,#ececec)"></div>
<div class="a" style="left:730px;top:500px;width:108px;height:26px;background:#e1e1e1;border:1px solid #adadad"></div>
<div class="t " style="left:734.0px;width:100px;text-align:center;top:507.00px;font-size:12.8px;color:#000;">Odustani</div>
<div class="a" style="left:610px;top:425px;width:239px;height:113px;border:5px solid #e5141d"></div></body></html>
